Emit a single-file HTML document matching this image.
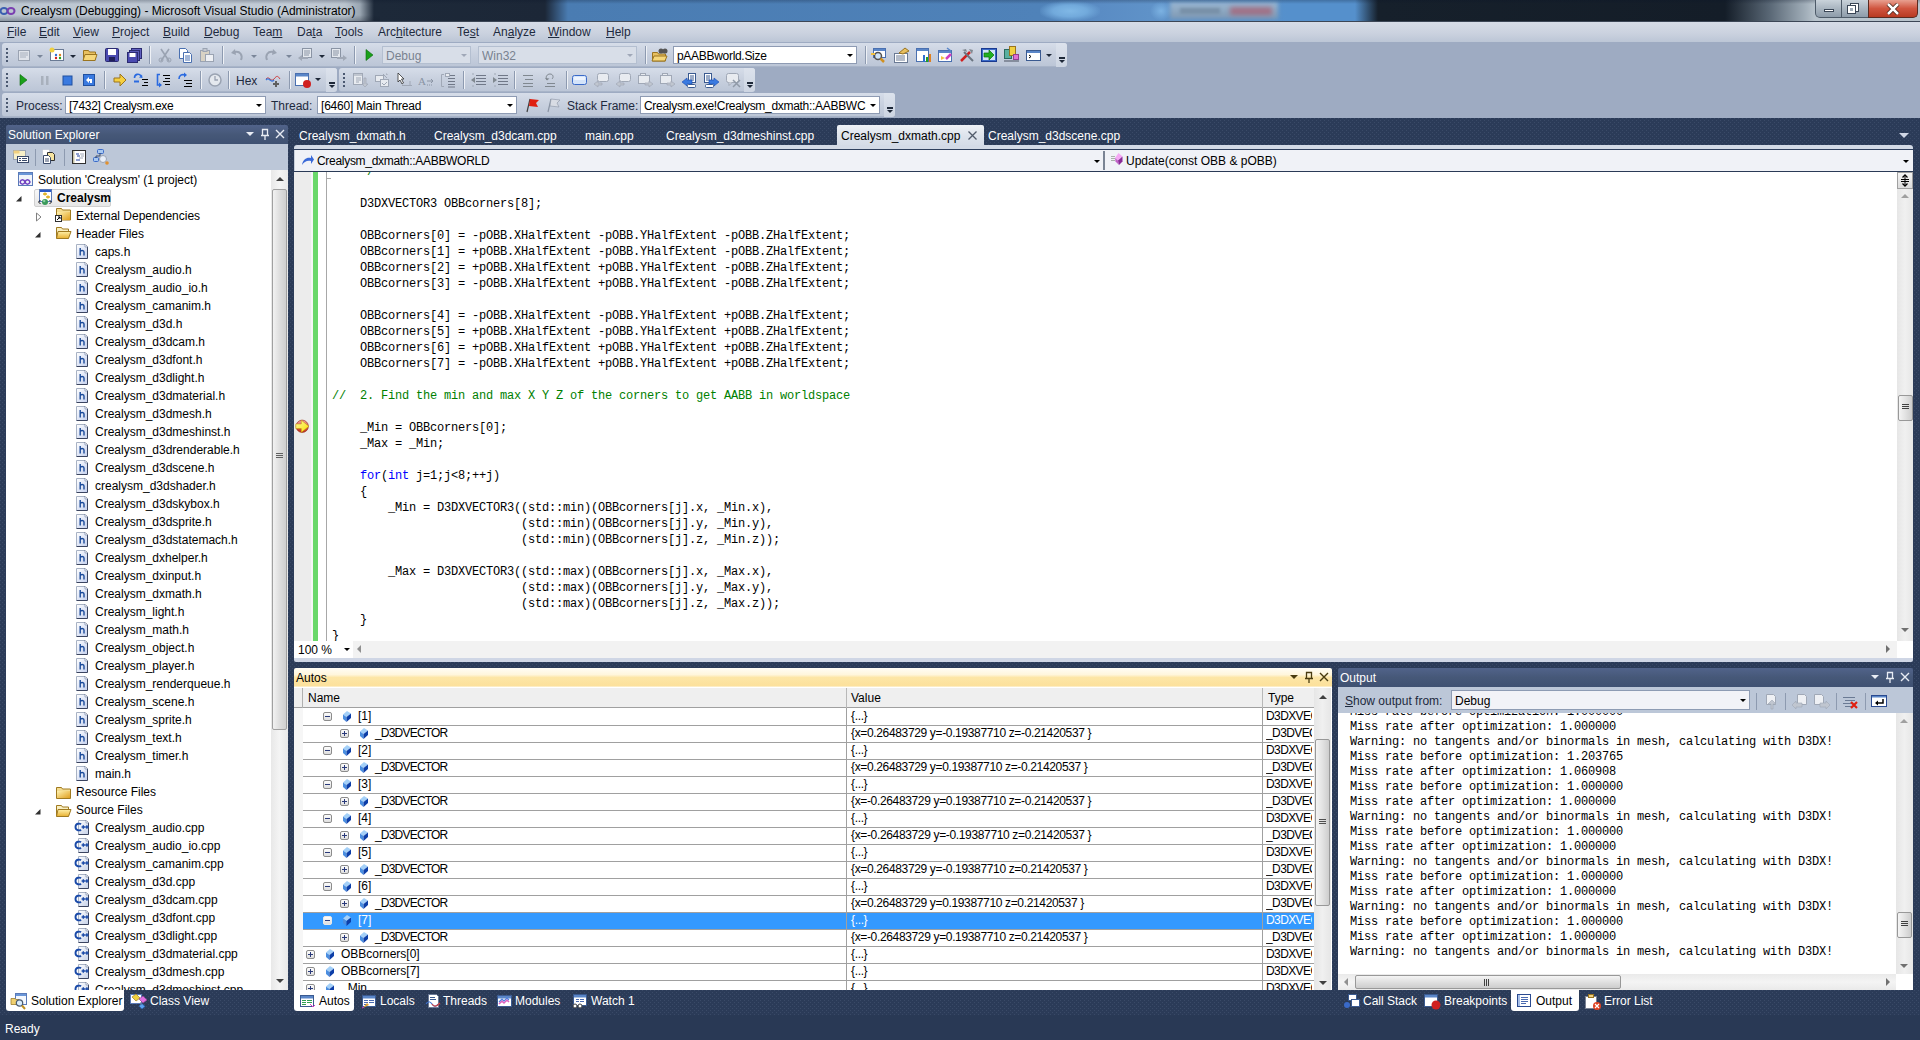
<!DOCTYPE html>
<html><head><meta charset="utf-8">
<style>
*{box-sizing:border-box}
html,body{margin:0;padding:0}
body{width:1920px;height:1040px;overflow:hidden;position:relative;background:conic-gradient(at 1px 1px,#0000 75%,#3a4a67 0) 0 0/4px 4px,conic-gradient(at 1px 1px,#0000 75%,#3a4a67 0) 2px 2px/4px 4px,#2b3b58;font-family:"Liberation Sans",sans-serif;font-size:12px;color:#000}
.a{position:absolute}
.t{position:absolute;white-space:pre;line-height:14px}
.c{position:absolute;white-space:pre;line-height:16px;font-family:"Liberation Mono",monospace;font-size:12px;letter-spacing:-0.2px}
.o{position:absolute;white-space:pre;line-height:15px;font-family:"Liberation Mono",monospace;font-size:12px;letter-spacing:-0.2px}
.kw{color:#0000ff}.cm{color:#008000}
.ic{position:absolute;width:16px;height:16px}
</style></head><body>
<div class="a" style="left:0px;top:0px;width:1920px;height:21px;background:linear-gradient(90deg,#bcc6d1 0,#c2cbd5 300px,#bac4ce 345px,#9aa6b2 360px,#1d2939 374px,#1c2737 545px,#4a7cb2 568px,#4f82b9 1040px,#5a8cc4 1100px,#5f92c8 1150px,#5590cc 1290px,#5590cc 1355px,#16202b 1378px,#141d28 1725px,#5a6876 1770px,#a0adb8 1805px,#b8c3cc 1815px)"></div>
<div class="a" style="left:1040px;top:1px;width:60px;height:20px;background:radial-gradient(ellipse at center,#80b8e6 0,#72aadc 40%,rgba(90,140,196,0) 75%)"></div>
<div class="a" style="left:1150px;top:1px;width:22px;height:20px;background:radial-gradient(ellipse at center,#7cb2e2 0,rgba(90,140,196,0) 70%)"></div>
<div class="a" style="left:1170px;top:2px;width:108px;height:17px;background:linear-gradient(#9cb8d2,#7e98b2);filter:blur(2px)"></div>
<div class="a" style="left:1180px;top:8px;width:40px;height:6px;background:#7890a8;filter:blur(1.5px)"></div>
<div class="a" style="left:1230px;top:7px;width:42px;height:8px;background:#b04a5c;opacity:0.6;filter:blur(2.5px)"></div>
<div class="a" style="left:0;top:0;width:1920px;height:4px;background:linear-gradient(rgba(10,20,40,0.25),rgba(10,20,40,0))"></div>
<div class="a" style="left:0;top:15px;width:380px;height:6px;background:linear-gradient(rgba(20,30,45,0),rgba(20,30,45,0.3))"></div>
<svg class="a" style="left:0;top:5px" width="16" height="12"><ellipse cx="4" cy="6" rx="3.5" ry="3" fill="none" stroke="#3b5fb0" stroke-width="2"/><ellipse cx="11" cy="6" rx="3.5" ry="3" fill="none" stroke="#7a3fb0" stroke-width="2"/></svg>
<div class="t" style="left:21px;top:4px;color:#000">Crealysm (Debugging) - Microsoft Visual Studio (Administrator)</div>
<div class="a" style="left:0px;top:21px;width:1920px;height:1px;background:#3c4656"></div>
<div class="a" style="left:1815px;top:0px;width:27px;height:18px;background:linear-gradient(#c9d2da,#a9b5c0 50%,#8e9caa);border:1px solid #4d5a68;border-top:none;border-radius:0 0 0 5px"></div>
<div class="a" style="left:1824px;top:9px;width:10px;height:3px;background:#fff;border:1px solid #3a4656"></div>
<div class="a" style="left:1841px;top:0px;width:28px;height:18px;background:linear-gradient(#c9d2da,#a9b5c0 50%,#8e9caa);border:1px solid #4d5a68;border-top:none"></div>
<div class="a" style="left:1851px;top:4px;width:7px;height:7px;border:2px solid #fff;outline:1px solid #3a4656"></div>
<div class="a" style="left:1848px;top:6px;width:7px;height:7px;border:2px solid #fff;background:#a0acb8;outline:1px solid #3a4656"></div>
<div class="a" style="left:1868px;top:0px;width:50px;height:18px;background:linear-gradient(#e8a090,#d0553f 50%,#b83a22);border:1px solid #5a2a20;border-top:none;border-radius:0 0 5px 0"></div>
<svg class="a" style="left:1886px;top:3px" width="14" height="12"><path d="M2 1 L12 11 M12 1 L2 11" stroke="#3a1a10" stroke-width="4"/><path d="M2 1 L12 11 M12 1 L2 11" stroke="#fff" stroke-width="2.5"/></svg>
<div class="a" style="left:0px;top:22px;width:1920px;height:20px;background:linear-gradient(#d6dce7,#cbd2df 55%,#bcc6d6)"></div>
<div class="t" style="left:7px;top:25px;color:#1e2a3e"><u>F</u>ile</div>
<div class="t" style="left:39px;top:25px;color:#1e2a3e"><u>E</u>dit</div>
<div class="t" style="left:73px;top:25px;color:#1e2a3e"><u>V</u>iew</div>
<div class="t" style="left:112px;top:25px;color:#1e2a3e"><u>P</u>roject</div>
<div class="t" style="left:163px;top:25px;color:#1e2a3e"><u>B</u>uild</div>
<div class="t" style="left:204px;top:25px;color:#1e2a3e"><u>D</u>ebug</div>
<div class="t" style="left:253px;top:25px;color:#1e2a3e">Tea<u>m</u></div>
<div class="t" style="left:297px;top:25px;color:#1e2a3e">Da<u>t</u>a</div>
<div class="t" style="left:335px;top:25px;color:#1e2a3e"><u>T</u>ools</div>
<div class="t" style="left:378px;top:25px;color:#1e2a3e">Arc<u>h</u>itecture</div>
<div class="t" style="left:457px;top:25px;color:#1e2a3e">Te<u>s</u>t</div>
<div class="t" style="left:493px;top:25px;color:#1e2a3e">An<u>a</u>lyze</div>
<div class="t" style="left:548px;top:25px;color:#1e2a3e"><u>W</u>indow</div>
<div class="t" style="left:606px;top:25px;color:#1e2a3e"><u>H</u>elp</div>
<div class="a" style="left:0px;top:42px;width:1920px;height:76px;background:#9eabc2"></div>
<div class="a" style="left:2px;top:43px;width:1065px;height:24px;background:linear-gradient(#d6dde9,#c9d1df 45%,#bcc6d7);border-radius:3px;border-bottom:1px solid #a8b4c8"></div>
<div class="a" style="left:6px;top:48px;width:2px;height:2px;background:#4a5870"></div>
<div class="a" style="left:6px;top:52px;width:2px;height:2px;background:#4a5870"></div>
<div class="a" style="left:6px;top:56px;width:2px;height:2px;background:#4a5870"></div>
<div class="a" style="left:6px;top:60px;width:2px;height:2px;background:#4a5870"></div>
<div class="a" style="left:1056px;top:43px;width:11px;height:24px;background:linear-gradient(#dce2ec,#cdd5e2);border-radius:0 3px 3px 0"></div>
<div class="a" style="left:1059px;top:57px;width:6px;height:2px;background:#1e2838"></div>
<div class="a" style="left:1059px;top:60px;width:0;height:0;border-left:3px solid transparent;border-right:3px solid transparent;border-top:3px solid #1e2838"></div>
<svg class="a" style="left:16px;top:47px" width="16" height="16" viewBox="0 0 16 16"><rect x="2.5" y="3.5" width="11" height="10" fill="#dfe3ea" stroke="#9aa3b2"/><path d="M4 6h8M4 8h8M4 10h6" stroke="#a8b0bd"/></svg>
<div class="a" style="left:37px;top:55px;width:0;height:0;border-left:3px solid transparent;border-right:3px solid transparent;border-top:3px solid #7a8699"></div>
<svg class="a" style="left:49px;top:47px" width="16" height="16" viewBox="0 0 16 16"><rect x="1.5" y="2.5" width="13" height="11" fill="#fff" stroke="#6a7a94"/><rect x="2" y="3" width="12" height="2" fill="#fff"/></svg>
<svg class="a" style="left:49px;top:47px" width="16" height="16" viewBox="0 0 16 16"><circle cx="3" cy="3" r="2.5" fill="#f0d040"/><circle cx="7" cy="8" r="1.2" fill="#3070d0"/><circle cx="11" cy="8" r="1.2" fill="#e08020"/><circle cx="7" cy="11" r="1.2" fill="#d02020"/><circle cx="11" cy="11" r="1.2" fill="#20a020"/></svg>
<div class="a" style="left:70px;top:55px;width:0;height:0;border-left:3px solid transparent;border-right:3px solid transparent;border-top:3px solid #1e2838"></div>
<svg class="a" style="left:82px;top:47px" width="16" height="16" viewBox="0 0 16 16"><path d="M1.5 3.5h5l1 1.5h6v8h-12z" fill="#e8c060" stroke="#9a7420"/><path d="M3 7.5h12l-2 6h-12z" fill="#f6d77a" stroke="#9a7420"/></svg>
<svg class="a" style="left:104px;top:47px" width="16" height="16" viewBox="0 0 16 16"><rect x="1.5" y="1.5" width="13" height="13" rx="1" fill="#4a4ab0" stroke="#2a2a70"/><rect x="4" y="2" width="8" height="6" fill="#fff"/><rect x="5" y="10" width="6" height="4" fill="#20205a"/></svg>
<svg class="a" style="left:126px;top:47px" width="16" height="16" viewBox="0 0 16 16"><rect x="5.5" y="1.5" width="10" height="10" fill="#6060c0" stroke="#2a2a70"/><rect x="3.5" y="3.5" width="10" height="10" fill="#5858b8" stroke="#2a2a70"/><rect x="1.5" y="5.5" width="10" height="10" fill="#4a4ab0" stroke="#2a2a70"/><rect x="3.5" y="6" width="6" height="4" fill="#fff"/></svg>
<div class="a" style="left:149px;top:46px;width:1px;height:18px;background:#8d9ab0;box-shadow:1px 0 0 #eef1f6"></div>
<svg class="a" style="left:157px;top:47px" width="16" height="16" viewBox="0 0 16 16"><path d="M4 2 L12 14 M12 2 L4 14" stroke="#9aa3b2" stroke-width="1.6"/><circle cx="4" cy="13" r="2" fill="none" stroke="#9aa3b2"/><circle cx="12" cy="13" r="2" fill="none" stroke="#9aa3b2"/></svg>
<svg class="a" style="left:177px;top:47px" width="16" height="16" viewBox="0 0 16 16"><path d="M2.5 1.5h6l2 2v8h-8z" fill="#fff" stroke="#4a70b0"/><path d="M6.5 5.5h6l2 2v8h-8z" fill="#fff" stroke="#4a70b0"/><path d="M8 9h5M8 11h5M8 13h5" stroke="#4a70b0"/></svg>
<svg class="a" style="left:199px;top:47px" width="16" height="16" viewBox="0 0 16 16"><rect x="1.5" y="3.5" width="9" height="11" fill="#d8d2c4" stroke="#9aa3b2"/><rect x="4" y="1.5" width="4" height="3" fill="#c4c8d0" stroke="#9aa3b2"/><rect x="6.5" y="7.5" width="8" height="7" fill="#eef0f4" stroke="#9aa3b2"/></svg>
<div class="a" style="left:222px;top:46px;width:1px;height:18px;background:#8d9ab0;box-shadow:1px 0 0 #eef1f6"></div>
<svg class="a" style="left:229px;top:47px" width="16" height="16" viewBox="0 0 16 16"><path d="M12 13 C14 8 11 4 6 5 L4 5.5" fill="none" stroke="#9aa3b2" stroke-width="2"/><path d="M2 6 L6 2 L7 8z" fill="#9aa3b2"/></svg>
<div class="a" style="left:251px;top:55px;width:0;height:0;border-left:3px solid transparent;border-right:3px solid transparent;border-top:3px solid #7a8699"></div>
<svg class="a" style="left:263px;top:47px" width="16" height="16" viewBox="0 0 16 16"><path d="M4 13 C2 8 5 4 10 5 L12 5.5" fill="none" stroke="#9aa3b2" stroke-width="2"/><path d="M14 6 L10 2 L9 8z" fill="#9aa3b2"/></svg>
<div class="a" style="left:286px;top:55px;width:0;height:0;border-left:3px solid transparent;border-right:3px solid transparent;border-top:3px solid #7a8699"></div>
<svg class="a" style="left:297px;top:47px" width="16" height="16" viewBox="0 0 16 16"><rect x="5.5" y="1.5" width="9" height="9" fill="#e4e8ee" stroke="#8a94a4"/><path d="M7 4h6M7 6h6M7 8h5" stroke="#8a94a4"/><path d="M1 11 l4 -3 v2 h6 v2 h-6 v2z" fill="#a0a8b6"/></svg>
<div class="a" style="left:319px;top:55px;width:0;height:0;border-left:3px solid transparent;border-right:3px solid transparent;border-top:3px solid #1e2838"></div>
<svg class="a" style="left:330px;top:47px" width="18" height="16" viewBox="0 0 18 16"><rect x="1.5" y="1.5" width="9" height="9" fill="#e4e8ee" stroke="#8a94a4"/><path d="M3 4h6M3 6h6M3 8h5" stroke="#8a94a4"/><path d="M17 11 l-4 -3 v2 h-6 v2 h6 v2z" fill="#a0a8b6"/></svg>
<div class="a" style="left:354px;top:46px;width:1px;height:18px;background:#8d9ab0;box-shadow:1px 0 0 #eef1f6"></div>
<svg class="a" style="left:361px;top:47px" width="16" height="16" viewBox="0 0 16 16"><path d="M5 2.5 L12 8 L5 13.5z" fill="#1aa01a" stroke="#0a6a0a" stroke-width="0.6"/></svg>
<div class="a" style="left:382px;top:46px;width:89px;height:18px;background:#d8dee8;border:1px solid #b4bfd0"></div>
<div class="t" style="left:386px;top:49px;width:72px;overflow:hidden;color:#788290;letter-spacing:0px">Debug</div>
<div class="a" style="left:461px;top:54px;width:0;height:0;border-left:3px solid transparent;border-right:3px solid transparent;border-top:3px solid #a0a8b8"></div>
<div class="a" style="left:478px;top:46px;width:159px;height:18px;background:#d8dee8;border:1px solid #b4bfd0"></div>
<div class="t" style="left:482px;top:49px;width:142px;overflow:hidden;color:#788290;letter-spacing:0px">Win32</div>
<div class="a" style="left:627px;top:54px;width:0;height:0;border-left:3px solid transparent;border-right:3px solid transparent;border-top:3px solid #a0a8b8"></div>
<div class="a" style="left:645px;top:46px;width:1px;height:18px;background:#8d9ab0;box-shadow:1px 0 0 #eef1f6"></div>
<svg class="a" style="left:651px;top:47px" width="17" height="16" viewBox="0 0 17 16"><path d="M1.5 5.5h5l1 1.5h7v7h-13z" fill="#e8c060" stroke="#9a7420"/><path d="M3 9h13l-2 5h-13z" fill="#f6d77a" stroke="#9a7420"/><circle cx="10" cy="4" r="2.5" fill="#555" /><circle cx="14" cy="4" r="2.5" fill="#555"/></svg>
<div class="a" style="left:673px;top:46px;width:184px;height:18px;background:#fff;border:1px solid #8e9bb3"></div>
<div class="t" style="left:677px;top:49px;width:167px;overflow:hidden;color:#000;letter-spacing:-0.3px">pAABBworld.Size</div>
<div class="a" style="left:847px;top:54px;width:0;height:0;border-left:3px solid transparent;border-right:3px solid transparent;border-top:3px solid #000"></div>
<div class="a" style="left:865px;top:46px;width:1px;height:18px;background:#8d9ab0;box-shadow:1px 0 0 #eef1f6"></div>
<svg class="a" style="left:870px;top:47px" width="17" height="16" viewBox="0 0 17 16"><rect x="3.5" y="1.5" width="12" height="9" fill="#fff" stroke="#4a70b0"/><rect x="4" y="2" width="11" height="2" fill="#5a86c8"/><circle cx="8" cy="9" r="3.5" fill="#cfe4f8" stroke="#505050" stroke-width="1.5"/><path d="M10.5 11.5 L14 15" stroke="#d09020" stroke-width="2.5"/><path d="M1 7h4" stroke="#f0c040" stroke-width="2"/></svg>
<svg class="a" style="left:893px;top:47px" width="17" height="16" viewBox="0 0 17 16"><rect x="1.5" y="6.5" width="13" height="9" fill="#fff" stroke="#6a7a94"/><path d="M3 9h9M3 11h9M3 13h9" stroke="#6a7a94"/><path d="M6 6 l6 -5 l4 3 l-6 3z" fill="#e8c060" stroke="#9a7420"/></svg>
<svg class="a" style="left:915px;top:47px" width="17" height="16" viewBox="0 0 17 16"><rect x="1.5" y="1.5" width="12" height="13" fill="#fff" stroke="#4a70b0"/><rect x="2" y="2" width="11" height="2" fill="#5a86c8"/><rect x="8" y="8" width="2" height="7" fill="#3070d0"/><rect x="11" y="10" width="2" height="5" fill="#20a020"/><rect x="14" y="7" width="2" height="8" fill="#e08020"/></svg>
<svg class="a" style="left:937px;top:47px" width="17" height="16" viewBox="0 0 17 16"><rect x="1.5" y="3.5" width="13" height="11" fill="#fff" stroke="#4a70b0"/><rect x="2" y="4" width="12" height="2" fill="#5a86c8"/><path d="M4 9 l4 2 l-4 2z" fill="#f0c040"/><path d="M9 12 l5 -5" stroke="#d040c0" stroke-width="2.5"/><path d="M10 1 l4 3" stroke="#5a86c8" stroke-width="1.5"/></svg>
<svg class="a" style="left:959px;top:47px" width="17" height="16" viewBox="0 0 17 16"><path d="M2 14 L11 5" stroke="#d02020" stroke-width="2.5"/><path d="M14 14 L5 5" stroke="#6a7480" stroke-width="2"/><path d="M3 3 l4 -1 l1 3z" fill="#808890"/><path d="M10 2 l4 1 l-1 4z" fill="#808890"/></svg>
<svg class="a" style="left:981px;top:47px" width="17" height="16" viewBox="0 0 17 16"><rect x="0.5" y="1.5" width="15" height="13" fill="#3a6ac8" stroke="#1a3a90"/><rect x="2" y="3" width="12" height="10" fill="#cfe4f8"/><path d="M3 6h5v-3l5 5l-5 5v-3h-5z" fill="#20b020" stroke="#0a700a" stroke-width="0.7"/></svg>
<svg class="a" style="left:1003px;top:45px" width="17" height="18" viewBox="0 0 17 18"><rect x="1.5" y="4.5" width="7" height="9" fill="#5ab0a0" stroke="#2a6a60"/><rect x="6.5" y="1.5" width="6" height="9" fill="#f0d040" stroke="#9a7420"/><rect x="10.5" y="9.5" width="5" height="5" fill="#e070d0" stroke="#904090"/><path d="M1 16h15" stroke="#707888" stroke-width="1.5"/></svg>
<svg class="a" style="left:1025px;top:47px" width="17" height="16" viewBox="0 0 17 16"><rect x="1.5" y="3.5" width="14" height="10" fill="#fff" stroke="#3a5a90"/><rect x="2" y="4" width="13" height="2" fill="#5a86c8"/><path d="M4 8 l2 1.5 l-2 1.5" fill="none" stroke="#000"/></svg>
<div class="a" style="left:1046px;top:54px;width:0;height:0;border-left:3px solid transparent;border-right:3px solid transparent;border-top:3px solid #1e2838"></div>
<div class="a" style="left:2px;top:68px;width:335px;height:24px;background:linear-gradient(#d6dde9,#c9d1df 45%,#bcc6d7);border-radius:3px;border-bottom:1px solid #a8b4c8"></div>
<div class="a" style="left:6px;top:73px;width:2px;height:2px;background:#4a5870"></div>
<div class="a" style="left:6px;top:77px;width:2px;height:2px;background:#4a5870"></div>
<div class="a" style="left:6px;top:81px;width:2px;height:2px;background:#4a5870"></div>
<div class="a" style="left:6px;top:85px;width:2px;height:2px;background:#4a5870"></div>
<div class="a" style="left:326px;top:68px;width:11px;height:24px;background:linear-gradient(#dce2ec,#cdd5e2);border-radius:0 3px 3px 0"></div>
<div class="a" style="left:329px;top:82px;width:6px;height:2px;background:#1e2838"></div>
<div class="a" style="left:329px;top:85px;width:0;height:0;border-left:3px solid transparent;border-right:3px solid transparent;border-top:3px solid #1e2838"></div>
<svg class="a" style="left:15px;top:72px" width="16" height="16" viewBox="0 0 16 16"><path d="M5 2.5 L12 8 L5 13.5z" fill="#1aa01a" stroke="#0a6a0a" stroke-width="0.6"/></svg>
<svg class="a" style="left:37px;top:72px" width="16" height="16" viewBox="0 0 16 16"><rect x="4" y="4" width="2.5" height="9" fill="#a8b0bc"/><rect x="9" y="4" width="2.5" height="9" fill="#a8b0bc"/></svg>
<svg class="a" style="left:59px;top:72px" width="16" height="16" viewBox="0 0 16 16"><rect x="4" y="4" width="9" height="9" fill="#3a7ae0" stroke="#2050a0"/></svg>
<svg class="a" style="left:81px;top:72px" width="16" height="16" viewBox="0 0 16 16"><rect x="2.5" y="2.5" width="11" height="11" fill="#3a7ae0" stroke="#2050a0"/><path d="M5 8 l3 -3 v2 h3 v4 h-2 v-2 h-1 v2z" fill="#fff"/></svg>
<div class="a" style="left:104px;top:71px;width:1px;height:18px;background:#8d9ab0;box-shadow:1px 0 0 #eef1f6"></div>
<svg class="a" style="left:112px;top:72px" width="16" height="16" viewBox="0 0 16 16"><path d="M2 6h6v-4l6 6l-6 6v-4h-6z" fill="#f6d040" stroke="#9a7420"/></svg>
<svg class="a" style="left:133px;top:72px" width="16" height="16" viewBox="0 0 16 16"><path d="M1.5 6 C1.5 2 6 1 8 4" fill="none" stroke="#2a6ae0" stroke-width="1.6"/><path d="M6 5.5 L9.5 6 L9 2.5z" fill="#2a6ae0"/><path d="M9 7.5h6M11 10.5h4M9 13.5h6" stroke="#000" stroke-width="1"/><path d="M1 8.5h5v2h-5z" fill="#2a6ae0"/></svg>
<svg class="a" style="left:155px;top:72px" width="16" height="16" viewBox="0 0 16 16"><path d="M5 2.5 H2.5 V13 H5" fill="none" stroke="#2a6ae0" stroke-width="1.6"/><path d="M4 15.5 L7 13 L4 10.5z" fill="#2a6ae0"/><path d="M8 3.5h7M10 6.5h5M8 9.5h7M10 12.5h5" stroke="#000" stroke-width="1"/></svg>
<svg class="a" style="left:177px;top:72px" width="16" height="16" viewBox="0 0 16 16"><path d="M2 7 C2 3 5 2 8 3" fill="none" stroke="#2a6ae0" stroke-width="1.6"/><path d="M7 0.5 L10 3 L7 5.5z" fill="#2a6ae0"/><path d="M7 8.5h8M9 11.5h6M7 14.5h8" stroke="#000" stroke-width="1"/></svg>
<div class="a" style="left:200px;top:71px;width:1px;height:18px;background:#8d9ab0;box-shadow:1px 0 0 #eef1f6"></div>
<svg class="a" style="left:207px;top:72px" width="16" height="16" viewBox="0 0 16 16"><circle cx="8" cy="8" r="6" fill="#e4e8ee" stroke="#9aa3b2" stroke-width="1.5"/><path d="M8 4v4h3" stroke="#9aa3b2" stroke-width="1.3" fill="none"/></svg>
<div class="a" style="left:228px;top:71px;width:1px;height:18px;background:#8d9ab0;box-shadow:1px 0 0 #eef1f6"></div>
<div class="t" style="left:236px;top:74px;color:#1e2a3e">Hex</div>
<svg class="a" style="left:265px;top:72px" width="16" height="16" viewBox="0 0 16 16"><path d="M1 7 c3 -4 5 4 8 0 s4 -3 6 0" fill="none" stroke="#d04040" stroke-width="1"/><path d="M1 8 c3 -4 5 4 8 0" fill="none" stroke="#3a7ae0" stroke-width="1.3"/><path d="M11 9v6M8 12h6" stroke="#606060" stroke-width="2"/></svg>
<div class="a" style="left:289px;top:71px;width:1px;height:18px;background:#8d9ab0;box-shadow:1px 0 0 #eef1f6"></div>
<svg class="a" style="left:295px;top:72px" width="18" height="17" viewBox="0 0 18 17"><rect x="0.5" y="1.5" width="13" height="12" fill="#fff" stroke="#4a70b0"/><rect x="1" y="2" width="12" height="2.5" fill="#5a86c8"/><circle cx="12" cy="12" r="4" fill="#d02020"/></svg>
<div class="a" style="left:315px;top:78px;width:0;height:0;border-left:3px solid transparent;border-right:3px solid transparent;border-top:3px solid #1e2838"></div>
<div class="a" style="left:339px;top:68px;width:416px;height:24px;background:linear-gradient(#d6dde9,#c9d1df 45%,#bcc6d7);border-radius:3px;border-bottom:1px solid #a8b4c8"></div>
<div class="a" style="left:343px;top:73px;width:2px;height:2px;background:#4a5870"></div>
<div class="a" style="left:343px;top:77px;width:2px;height:2px;background:#4a5870"></div>
<div class="a" style="left:343px;top:81px;width:2px;height:2px;background:#4a5870"></div>
<div class="a" style="left:343px;top:85px;width:2px;height:2px;background:#4a5870"></div>
<div class="a" style="left:744px;top:68px;width:11px;height:24px;background:linear-gradient(#dce2ec,#cdd5e2);border-radius:0 3px 3px 0"></div>
<div class="a" style="left:747px;top:82px;width:6px;height:2px;background:#1e2838"></div>
<div class="a" style="left:747px;top:85px;width:0;height:0;border-left:3px solid transparent;border-right:3px solid transparent;border-top:3px solid #1e2838"></div>
<svg class="a" style="left:352px;top:72px" width="17" height="16" viewBox="0 0 17 16"><rect x="1.5" y="1.5" width="9" height="11" fill="#e8ebf0" stroke="#a0a8b6"/><rect x="2" y="2" width="8" height="2" fill="#c0c6d0"/><path d="M4 6h5M4 8h5M4 10h3" stroke="#a0a8b6"/><path d="M12 6v6h-2l3 3l3-3h-2v-6z" fill="#c0c6d0" stroke="#a0a8b6" stroke-width="0.7"/></svg>
<svg class="a" style="left:374px;top:72px" width="17" height="16" viewBox="0 0 17 16"><rect x="1.5" y="3.5" width="8" height="6" fill="#e8ebf0" stroke="#a0a8b6"/><rect x="6.5" y="7.5" width="8" height="7" fill="#e8ebf0" stroke="#a0a8b6"/><path d="M9 2 l4 4 M12 2h1v1" stroke="#a0a8b6" fill="none"/><path d="M8 11 l2 2 l3 -3" stroke="#a0a8b6" fill="none"/></svg>
<svg class="a" style="left:396px;top:72px" width="17" height="16" viewBox="0 0 17 16"><path d="M2 1 L2 10 L4 8 L6 12 L7.5 11 L5.5 7 L8 7z" fill="#fff" stroke="#303030" stroke-width="0.8"/><path d="M6 13.5h10M14 9v4.5" stroke="#a0a8b6"/></svg>
<svg class="a" style="left:418px;top:72px" width="17" height="16" viewBox="0 0 17 16"><text x="0" y="13" font-family="Liberation Serif" font-size="11" fill="#8a94a4">A</text><path d="M9 9h6M13 7l2 2l-2 2" stroke="#8a94a4" fill="none"/><path d="M9 13h1M11 13h1M13 13h1" stroke="#8a94a4"/></svg>
<svg class="a" style="left:440px;top:72px" width="17" height="16" viewBox="0 0 17 16"><path d="M4 2.5H1.5v12H4" fill="none" stroke="#a0a8b6"/><path d="M6 3.5h9M8 6.5h7M8 9.5h7M8 12.5h7M8 15h7" stroke="#707888"/><rect x="5.5" y="1.5" width="4" height="3" fill="#e8ebf0" stroke="#a0a8b6"/></svg>
<div class="a" style="left:463px;top:71px;width:1px;height:18px;background:#8d9ab0;box-shadow:1px 0 0 #eef1f6"></div>
<svg class="a" style="left:470px;top:72px" width="17" height="16" viewBox="0 0 17 16"><path d="M6 3.5h10M6 6.5h10M6 9.5h10M6 12.5h10" stroke="#707888"/><path d="M1 8 l4-3v6z" fill="#808890"/><path d="M3 1v2M3 13v2" stroke="#a0a8b6"/></svg>
<svg class="a" style="left:492px;top:72px" width="17" height="16" viewBox="0 0 17 16"><path d="M6 3.5h10M6 6.5h10M6 9.5h10M6 12.5h10" stroke="#707888"/><path d="M5 8 l-4-3v6z" fill="#808890"/><path d="M3 1v2M3 13v2" stroke="#a0a8b6"/></svg>
<div class="a" style="left:514px;top:71px;width:1px;height:18px;background:#8d9ab0;box-shadow:1px 0 0 #eef1f6"></div>
<svg class="a" style="left:520px;top:72px" width="17" height="16" viewBox="0 0 17 16"><path d="M3 3.5h10M5 7.5h8M3 11.5h10M3 14.5h10" stroke="#808890"/></svg>
<svg class="a" style="left:542px;top:72px" width="17" height="16" viewBox="0 0 17 16"><path d="M3 14.5h10M5 11.5h8" stroke="#808890"/><path d="M5 8 C3 5 5 2 8 2 C11 2 12 5 10 7" fill="none" stroke="#808890"/><path d="M3 6l2 2.5l2.5-2z" fill="#808890"/></svg>
<div class="a" style="left:566px;top:71px;width:1px;height:18px;background:#8d9ab0;box-shadow:1px 0 0 #eef1f6"></div>
<svg class="a" style="left:571px;top:72px" width="17" height="16" viewBox="0 0 17 16"><rect x="1.5" y="3.5" width="14" height="9" rx="2" fill="#d4e4fa" stroke="#3a6ac8"/><rect x="3" y="5" width="11" height="3" rx="1" fill="#eef4fe"/></svg>
<svg class="a" style="left:593px;top:72px" width="17" height="16" viewBox="0 0 17 16"><rect x="4.5" y="1.5" width="11" height="8" rx="2" fill="#e8ebf0" stroke="#a0a8b6"/><path d="M1 12l4-3v2h4v2h-4v2z" fill="#c0c6d0" stroke="#a0a8b6" stroke-width="0.7"/></svg>
<svg class="a" style="left:615px;top:72px" width="17" height="16" viewBox="0 0 17 16"><rect x="4.5" y="1.5" width="11" height="8" rx="2" fill="#e8ebf0" stroke="#a0a8b6"/><path d="M1 12l4-3v2h4v2h-4v2z" fill="#c0c6d0" stroke="#a0a8b6" stroke-width="0.7"/></svg>
<svg class="a" style="left:637px;top:72px" width="17" height="16" viewBox="0 0 17 16"><rect x="1.5" y="3.5" width="11" height="8" fill="#e8ebf0" stroke="#a0a8b6"/><rect x="3.5" y="1.5" width="5" height="2" fill="#e8ebf0" stroke="#a0a8b6"/><path d="M16 12l-4-3v2h-4v2h4v2z" fill="#c0c6d0" stroke="#a0a8b6" stroke-width="0.7"/></svg>
<svg class="a" style="left:659px;top:72px" width="17" height="16" viewBox="0 0 17 16"><rect x="1.5" y="3.5" width="11" height="8" fill="#e8ebf0" stroke="#a0a8b6"/><rect x="3.5" y="1.5" width="5" height="2" fill="#e8ebf0" stroke="#a0a8b6"/><path d="M16 12l-4-3v2h-4v2h4v2z" fill="#c0c6d0" stroke="#a0a8b6" stroke-width="0.7"/></svg>
<svg class="a" style="left:681px;top:72px" width="17" height="16" viewBox="0 0 17 16"><rect x="7.5" y="1.5" width="7" height="9" fill="#fff" stroke="#3a5a90"/><path d="M9 4h4M9 6h4M9 8h4" stroke="#3a5a90"/><path d="M1 10 l5-4 v2h5v4h-5v2z" fill="#3a7ae0" stroke="#1a4ab0" stroke-width="0.6"/><rect x="6.5" y="12.5" width="8" height="3" rx="1" fill="#fff" stroke="#3a5a90"/></svg>
<svg class="a" style="left:703px;top:72px" width="17" height="16" viewBox="0 0 17 16"><rect x="1.5" y="1.5" width="7" height="9" fill="#fff" stroke="#3a5a90"/><path d="M3 4h4M3 6h4M3 8h4" stroke="#3a5a90"/><path d="M16 10 l-5-4 v2h-5v4h5v2z" fill="#3a7ae0" stroke="#1a4ab0" stroke-width="0.6"/><rect x="2.5" y="12.5" width="8" height="3" rx="1" fill="#fff" stroke="#3a5a90"/></svg>
<svg class="a" style="left:725px;top:72px" width="17" height="16" viewBox="0 0 17 16"><rect x="1.5" y="1.5" width="12" height="9" rx="2" fill="#e8ebf0" stroke="#a0a8b6"/><path d="M4 10.5v3l3-3" fill="#e8ebf0" stroke="#a0a8b6"/><path d="M8 8 l7 7 M15 8 l-7 7" stroke="#909aa8" stroke-width="1.5"/></svg>
<div class="a" style="left:2px;top:93px;width:893px;height:24px;background:linear-gradient(#d6dde9,#c9d1df 45%,#bcc6d7);border-radius:3px;border-bottom:1px solid #a8b4c8"></div>
<div class="a" style="left:6px;top:98px;width:2px;height:2px;background:#4a5870"></div>
<div class="a" style="left:6px;top:102px;width:2px;height:2px;background:#4a5870"></div>
<div class="a" style="left:6px;top:106px;width:2px;height:2px;background:#4a5870"></div>
<div class="a" style="left:6px;top:110px;width:2px;height:2px;background:#4a5870"></div>
<div class="a" style="left:884px;top:93px;width:11px;height:24px;background:linear-gradient(#dce2ec,#cdd5e2);border-radius:0 3px 3px 0"></div>
<div class="a" style="left:887px;top:107px;width:6px;height:2px;background:#1e2838"></div>
<div class="a" style="left:887px;top:110px;width:0;height:0;border-left:3px solid transparent;border-right:3px solid transparent;border-top:3px solid #1e2838"></div>
<div class="t" style="left:16px;top:99px;color:#1e2a3e">Process:</div>
<div class="a" style="left:65px;top:96px;width:201px;height:18px;background:#fff;border:1px solid #8e9bb3"></div>
<div class="t" style="left:69px;top:99px;width:184px;overflow:hidden;color:#000;letter-spacing:-0.3px">[7432] Crealysm.exe</div>
<div class="a" style="left:256px;top:104px;width:0;height:0;border-left:3px solid transparent;border-right:3px solid transparent;border-top:3px solid #000"></div>
<div class="t" style="left:271px;top:99px;color:#1e2a3e">Thread:</div>
<div class="a" style="left:317px;top:96px;width:200px;height:18px;background:#fff;border:1px solid #8e9bb3"></div>
<div class="t" style="left:321px;top:99px;width:183px;overflow:hidden;color:#000;letter-spacing:-0.2px">[6460] Main Thread</div>
<div class="a" style="left:507px;top:104px;width:0;height:0;border-left:3px solid transparent;border-right:3px solid transparent;border-top:3px solid #000"></div>
<svg class="a" style="left:524px;top:97px" width="17" height="16" viewBox="0 0 17 16"><path d="M3 15 L6 2" stroke="#404040" stroke-width="1.2"/><path d="M6 2 l9 1 l-3 3 l2 4 l-9 -1z" fill="#e02010"/></svg>
<svg class="a" style="left:545px;top:97px" width="17" height="16" viewBox="0 0 17 16"><path d="M3 15 L6 2" stroke="#8a94a4" stroke-width="1.2"/><path d="M6 2 l9 1 l-3 3 l2 4 l-9 -1z" fill="#d8dce4" stroke="#8a94a4" stroke-width="0.6"/></svg>
<div class="t" style="left:567px;top:99px;color:#1e2a3e">Stack Frame:</div>
<div class="a" style="left:640px;top:96px;width:240px;height:18px;background:#fff;border:1px solid #8e9bb3"></div>
<div class="t" style="left:644px;top:99px;width:223px;overflow:hidden;color:#000;letter-spacing:-0.3px">Crealysm.exe!Crealysm_dxmath::AABBWC</div>
<div class="a" style="left:870px;top:104px;width:0;height:0;border-left:3px solid transparent;border-right:3px solid transparent;border-top:3px solid #000"></div>
<div class="a" style="left:6px;top:125px;width:282px;height:19px;background:linear-gradient(#51638a,#465878 50%,#3f5172);border-radius:2px 2px 0 0"></div>
<div class="t" style="left:8px;top:128px;color:#fff">Solution Explorer</div>
<div class="a" style="left:246px;top:132px;width:0;height:0;border-left:4px solid transparent;border-right:4px solid transparent;border-top:4px solid #e8ecf4"></div>
<svg class="a" style="left:260px;top:128px" width="10" height="13" viewBox="0 0 10 13"><path d="M2.5 1.5h5v6h-5z M1 7.5h8 M5 8v4" fill="none" stroke="#e8ecf4" stroke-width="1.3"/></svg>
<svg class="a" style="left:275px;top:129px" width="10" height="10" viewBox="0 0 10 10"><path d="M1 1L9 9M9 1L1 9" stroke="#e8ecf4" stroke-width="1.4"/></svg>
<div class="a" style="left:6px;top:144px;width:282px;height:26px;background:#bcc7d8"></div>
<svg class="a" style="left:13px;top:149px" width="17" height="16" viewBox="0 0 17 16"><rect x="0.5" y="1.5" width="12" height="9" fill="#f8f0c8" stroke="#9aa3b2"/><rect x="0.5" y="1.5" width="6" height="3" fill="#f0d080"/><rect x="4.5" y="7.5" width="11" height="6" fill="#fff" stroke="#3a4a6a"/><path d="M6 9.5h2M9 9.5h5M6 11.5h2M9 11.5h5" stroke="#3a4a6a"/></svg>
<div class="a" style="left:35px;top:149px;width:1px;height:17px;background:#8d9ab0"></div>
<svg class="a" style="left:41px;top:149px" width="17" height="16" viewBox="0 0 17 16"><rect x="1.5" y="0.5" width="7" height="9" fill="#fff" stroke="#b0b8c8" stroke-dasharray="1 1"/><path d="M6.5 3.5h5l2 2v6h-7z" fill="#f6e4a0" stroke="#303030"/><path d="M2.5 6.5h5l2 2v6h-7z" fill="#fff" stroke="#3a4a6a"/><path d="M4 10h4M4 12h4" stroke="#3a4a6a"/></svg>
<div class="a" style="left:64px;top:149px;width:1px;height:17px;background:#8d9ab0"></div>
<svg class="a" style="left:71px;top:149px" width="17" height="16" viewBox="0 0 17 16"><rect x="1.5" y="1.5" width="13" height="13" fill="#fff" stroke="#303030"/><rect x="2" y="2" width="1.5" height="12" fill="#c8c4a8"/><path d="M5 5h3M6 7h3M5 11h4" stroke="#2040a0" stroke-width="1.2"/><path d="M9 5h4M10 7h3M8 9h4" stroke="#a0a8b6"/></svg>
<svg class="a" style="left:93px;top:148px" width="17" height="18" viewBox="0 0 17 18"><rect x="4.5" y="1.5" width="6" height="4" rx="1" fill="#a8c8f0" stroke="#3a6ac8"/><rect x="0.5" y="9.5" width="5" height="4" rx="1" fill="#a8c8f0" stroke="#3a6ac8"/><path d="M7 5v3h-4v2" fill="none" stroke="#3a4a6a"/><circle cx="10" cy="11" r="3.5" fill="#e8eef8" stroke="#9aa3b2"/><circle cx="14" cy="15" r="1.8" fill="#e09030"/></svg>
<div class="a" style="left:6px;top:170px;width:282px;height:820px;background:#fff"></div>
<div class="a" style="left:271px;top:170px;width:17px;height:820px;background:linear-gradient(90deg,#e8e8e8,#f4f4f4 50%,#e8e8e8)"></div>
<div class="a" style="left:276px;top:177px;width:0;height:0;border-left:4px solid transparent;border-right:4px solid transparent;border-bottom:4px solid #404040"></div>
<div class="a" style="left:272px;top:189px;width:15px;height:541px;background:linear-gradient(90deg,#f2f2f2,#e0e0e0 45%,#cfcfcf);border:1px solid #a0a0a0;border-radius:2px"></div>
<svg class="a" style="left:275px;top:452px" width="9" height="8" viewBox="0 0 9 8"><path d="M1 1.5h7M1 3.5h7M1 5.5h7" stroke="#606060"/></svg>
<div class="a" style="left:276px;top:979px;width:0;height:0;border-left:4px solid transparent;border-right:4px solid transparent;border-top:4px solid #404040"></div>
<div class="a" style="left:6px;top:170px;width:265px;height:820px;overflow:hidden">
<svg class="a" style="left:11px;top:1px" width="17" height="16" viewBox="0 0 17 16"><rect x="1.5" y="1.5" width="14" height="13" fill="#f0f4fa" stroke="#5a7ab8"/><rect x="2" y="2" width="13" height="2" fill="#6a96d8"/><path d="M3 11 c1 -3 4 -3 5 0 s4 3 5 0 c-1 -3 -4 -3 -5 0 s-4 3 -5 0" fill="none" stroke="#7040c0" stroke-width="1.5"/></svg>
<div class="t" style="left:32px;top:3px;">Solution &#x27;Crealysm&#x27; (1 project)</div>
<div class="a" style="left:28px;top:19px;width:77px;height:18px;background:linear-gradient(#f8f8f8,#e6e6e6);border:1px solid #d0d0d0;border-radius:2px"></div>
<svg class="a" style="left:9px;top:25px" width="8" height="8" viewBox="0 0 8 8"><path d="M6.5 1 L6.5 6.5 L1 6.5z" fill="#303030"/></svg>
<svg class="a" style="left:31px;top:19px" width="17" height="17" viewBox="0 0 17 17"><rect x="2.5" y="0.5" width="12" height="12" fill="#fff" stroke="#5a7ab8"/><rect x="3" y="1" width="11" height="2" fill="#2a5ac8"/><path d="M6 5h4M8 3.5v3M9 8h4M11 6.5v3" stroke="#e0b020" stroke-width="1.5"/><circle cx="8" cy="13" r="3" fill="#3a9a5a"/><circle cx="7.2" cy="12" r="1.2" fill="#8ad0a0"/><path d="M3.5 11l-2 2l2 2M12.5 11l2 2l-2 2" fill="none" stroke="#000" stroke-width="0.9"/></svg>
<div class="t" style="left:51px;top:21px;font-weight:bold">Crealysm</div>
<svg class="a" style="left:29px;top:42px" width="8" height="10" viewBox="0 0 8 10"><path d="M1.5 1 L6 5 L1.5 9z" fill="#fff" stroke="#808080"/></svg>
<svg class="a" style="left:49px;top:37px" width="17" height="15" viewBox="0 0 17 15"><defs><linearGradient id="fge" x1="0" y1="0" x2="1" y2="1"><stop offset="0" stop-color="#fff2b0"/><stop offset="1" stop-color="#e0a020"/></linearGradient></defs><path d="M1.5 1.5h5l1 1.5h8v10h-14z" fill="#f4dc90" stroke="#a07a20"/><path d="M2 5h13v8h-13z" fill="url(#fge)"/><rect x="0.5" y="8.5" width="6" height="6" fill="#fff" stroke="#303030"/><path d="M2 13 l3 -3 M3 10h2v2" stroke="#000" fill="none"/></svg>
<div class="t" style="left:70px;top:39px;">External Dependencies</div>
<svg class="a" style="left:28px;top:61px" width="8" height="8" viewBox="0 0 8 8"><path d="M6.5 1 L6.5 6.5 L1 6.5z" fill="#303030"/></svg>
<svg class="a" style="left:49px;top:56px" width="17" height="14" viewBox="0 0 17 14"><defs><linearGradient id="fgo" x1="0" y1="0" x2="0" y2="1"><stop offset="0" stop-color="#fff0a8"/><stop offset="1" stop-color="#e8b030"/></linearGradient></defs><path d="M1.5 1.5h5l1 1.5h6v9h-12z" fill="#f8eec0" stroke="#a07a20"/><path d="M3 5.5h13l-2.5 7h-12z" fill="url(#fgo)" stroke="#a07a20"/></svg>
<div class="t" style="left:70px;top:57px;">Header Files</div>
<svg class="a" style="left:69px;top:73px" width="14" height="17" viewBox="0 0 14 17"><defs><linearGradient id="hg" x1="0" y1="0" x2="1" y2="1"><stop offset="0" stop-color="#ffffff"/><stop offset="1" stop-color="#c4d0ee"/></linearGradient></defs><path d="M1.5 1.5h8.5l2.5 2.5v11.5h-11z" fill="url(#hg)"/><path d="M1.5 15.5V1.5h8.5" fill="none" stroke="#a8b2c4"/><path d="M10 1.5l2.5 2.5v11.5h-11" fill="none" stroke="#3a4460"/><path d="M10 1.5v2.5h2.5" fill="#fff" stroke="#8090b0" stroke-width="0.7"/><path d="M5.2 5v7.5M5.2 8.6c0.5-1.6 3.8-1.6 3.8 0.4v3.5" fill="none" stroke="#1a4a9a" stroke-width="1.4"/></svg>
<div class="t" style="left:89px;top:75px;">caps.h</div>
<svg class="a" style="left:69px;top:91px" width="14" height="17" viewBox="0 0 14 17"><defs><linearGradient id="hg" x1="0" y1="0" x2="1" y2="1"><stop offset="0" stop-color="#ffffff"/><stop offset="1" stop-color="#c4d0ee"/></linearGradient></defs><path d="M1.5 1.5h8.5l2.5 2.5v11.5h-11z" fill="url(#hg)"/><path d="M1.5 15.5V1.5h8.5" fill="none" stroke="#a8b2c4"/><path d="M10 1.5l2.5 2.5v11.5h-11" fill="none" stroke="#3a4460"/><path d="M10 1.5v2.5h2.5" fill="#fff" stroke="#8090b0" stroke-width="0.7"/><path d="M5.2 5v7.5M5.2 8.6c0.5-1.6 3.8-1.6 3.8 0.4v3.5" fill="none" stroke="#1a4a9a" stroke-width="1.4"/></svg>
<div class="t" style="left:89px;top:93px;">Crealysm_audio.h</div>
<svg class="a" style="left:69px;top:109px" width="14" height="17" viewBox="0 0 14 17"><defs><linearGradient id="hg" x1="0" y1="0" x2="1" y2="1"><stop offset="0" stop-color="#ffffff"/><stop offset="1" stop-color="#c4d0ee"/></linearGradient></defs><path d="M1.5 1.5h8.5l2.5 2.5v11.5h-11z" fill="url(#hg)"/><path d="M1.5 15.5V1.5h8.5" fill="none" stroke="#a8b2c4"/><path d="M10 1.5l2.5 2.5v11.5h-11" fill="none" stroke="#3a4460"/><path d="M10 1.5v2.5h2.5" fill="#fff" stroke="#8090b0" stroke-width="0.7"/><path d="M5.2 5v7.5M5.2 8.6c0.5-1.6 3.8-1.6 3.8 0.4v3.5" fill="none" stroke="#1a4a9a" stroke-width="1.4"/></svg>
<div class="t" style="left:89px;top:111px;">Crealysm_audio_io.h</div>
<svg class="a" style="left:69px;top:127px" width="14" height="17" viewBox="0 0 14 17"><defs><linearGradient id="hg" x1="0" y1="0" x2="1" y2="1"><stop offset="0" stop-color="#ffffff"/><stop offset="1" stop-color="#c4d0ee"/></linearGradient></defs><path d="M1.5 1.5h8.5l2.5 2.5v11.5h-11z" fill="url(#hg)"/><path d="M1.5 15.5V1.5h8.5" fill="none" stroke="#a8b2c4"/><path d="M10 1.5l2.5 2.5v11.5h-11" fill="none" stroke="#3a4460"/><path d="M10 1.5v2.5h2.5" fill="#fff" stroke="#8090b0" stroke-width="0.7"/><path d="M5.2 5v7.5M5.2 8.6c0.5-1.6 3.8-1.6 3.8 0.4v3.5" fill="none" stroke="#1a4a9a" stroke-width="1.4"/></svg>
<div class="t" style="left:89px;top:129px;">Crealysm_camanim.h</div>
<svg class="a" style="left:69px;top:145px" width="14" height="17" viewBox="0 0 14 17"><defs><linearGradient id="hg" x1="0" y1="0" x2="1" y2="1"><stop offset="0" stop-color="#ffffff"/><stop offset="1" stop-color="#c4d0ee"/></linearGradient></defs><path d="M1.5 1.5h8.5l2.5 2.5v11.5h-11z" fill="url(#hg)"/><path d="M1.5 15.5V1.5h8.5" fill="none" stroke="#a8b2c4"/><path d="M10 1.5l2.5 2.5v11.5h-11" fill="none" stroke="#3a4460"/><path d="M10 1.5v2.5h2.5" fill="#fff" stroke="#8090b0" stroke-width="0.7"/><path d="M5.2 5v7.5M5.2 8.6c0.5-1.6 3.8-1.6 3.8 0.4v3.5" fill="none" stroke="#1a4a9a" stroke-width="1.4"/></svg>
<div class="t" style="left:89px;top:147px;">Crealysm_d3d.h</div>
<svg class="a" style="left:69px;top:163px" width="14" height="17" viewBox="0 0 14 17"><defs><linearGradient id="hg" x1="0" y1="0" x2="1" y2="1"><stop offset="0" stop-color="#ffffff"/><stop offset="1" stop-color="#c4d0ee"/></linearGradient></defs><path d="M1.5 1.5h8.5l2.5 2.5v11.5h-11z" fill="url(#hg)"/><path d="M1.5 15.5V1.5h8.5" fill="none" stroke="#a8b2c4"/><path d="M10 1.5l2.5 2.5v11.5h-11" fill="none" stroke="#3a4460"/><path d="M10 1.5v2.5h2.5" fill="#fff" stroke="#8090b0" stroke-width="0.7"/><path d="M5.2 5v7.5M5.2 8.6c0.5-1.6 3.8-1.6 3.8 0.4v3.5" fill="none" stroke="#1a4a9a" stroke-width="1.4"/></svg>
<div class="t" style="left:89px;top:165px;">Crealysm_d3dcam.h</div>
<svg class="a" style="left:69px;top:181px" width="14" height="17" viewBox="0 0 14 17"><defs><linearGradient id="hg" x1="0" y1="0" x2="1" y2="1"><stop offset="0" stop-color="#ffffff"/><stop offset="1" stop-color="#c4d0ee"/></linearGradient></defs><path d="M1.5 1.5h8.5l2.5 2.5v11.5h-11z" fill="url(#hg)"/><path d="M1.5 15.5V1.5h8.5" fill="none" stroke="#a8b2c4"/><path d="M10 1.5l2.5 2.5v11.5h-11" fill="none" stroke="#3a4460"/><path d="M10 1.5v2.5h2.5" fill="#fff" stroke="#8090b0" stroke-width="0.7"/><path d="M5.2 5v7.5M5.2 8.6c0.5-1.6 3.8-1.6 3.8 0.4v3.5" fill="none" stroke="#1a4a9a" stroke-width="1.4"/></svg>
<div class="t" style="left:89px;top:183px;">Crealysm_d3dfont.h</div>
<svg class="a" style="left:69px;top:199px" width="14" height="17" viewBox="0 0 14 17"><defs><linearGradient id="hg" x1="0" y1="0" x2="1" y2="1"><stop offset="0" stop-color="#ffffff"/><stop offset="1" stop-color="#c4d0ee"/></linearGradient></defs><path d="M1.5 1.5h8.5l2.5 2.5v11.5h-11z" fill="url(#hg)"/><path d="M1.5 15.5V1.5h8.5" fill="none" stroke="#a8b2c4"/><path d="M10 1.5l2.5 2.5v11.5h-11" fill="none" stroke="#3a4460"/><path d="M10 1.5v2.5h2.5" fill="#fff" stroke="#8090b0" stroke-width="0.7"/><path d="M5.2 5v7.5M5.2 8.6c0.5-1.6 3.8-1.6 3.8 0.4v3.5" fill="none" stroke="#1a4a9a" stroke-width="1.4"/></svg>
<div class="t" style="left:89px;top:201px;">Crealysm_d3dlight.h</div>
<svg class="a" style="left:69px;top:217px" width="14" height="17" viewBox="0 0 14 17"><defs><linearGradient id="hg" x1="0" y1="0" x2="1" y2="1"><stop offset="0" stop-color="#ffffff"/><stop offset="1" stop-color="#c4d0ee"/></linearGradient></defs><path d="M1.5 1.5h8.5l2.5 2.5v11.5h-11z" fill="url(#hg)"/><path d="M1.5 15.5V1.5h8.5" fill="none" stroke="#a8b2c4"/><path d="M10 1.5l2.5 2.5v11.5h-11" fill="none" stroke="#3a4460"/><path d="M10 1.5v2.5h2.5" fill="#fff" stroke="#8090b0" stroke-width="0.7"/><path d="M5.2 5v7.5M5.2 8.6c0.5-1.6 3.8-1.6 3.8 0.4v3.5" fill="none" stroke="#1a4a9a" stroke-width="1.4"/></svg>
<div class="t" style="left:89px;top:219px;">Crealysm_d3dmaterial.h</div>
<svg class="a" style="left:69px;top:235px" width="14" height="17" viewBox="0 0 14 17"><defs><linearGradient id="hg" x1="0" y1="0" x2="1" y2="1"><stop offset="0" stop-color="#ffffff"/><stop offset="1" stop-color="#c4d0ee"/></linearGradient></defs><path d="M1.5 1.5h8.5l2.5 2.5v11.5h-11z" fill="url(#hg)"/><path d="M1.5 15.5V1.5h8.5" fill="none" stroke="#a8b2c4"/><path d="M10 1.5l2.5 2.5v11.5h-11" fill="none" stroke="#3a4460"/><path d="M10 1.5v2.5h2.5" fill="#fff" stroke="#8090b0" stroke-width="0.7"/><path d="M5.2 5v7.5M5.2 8.6c0.5-1.6 3.8-1.6 3.8 0.4v3.5" fill="none" stroke="#1a4a9a" stroke-width="1.4"/></svg>
<div class="t" style="left:89px;top:237px;">Crealysm_d3dmesh.h</div>
<svg class="a" style="left:69px;top:253px" width="14" height="17" viewBox="0 0 14 17"><defs><linearGradient id="hg" x1="0" y1="0" x2="1" y2="1"><stop offset="0" stop-color="#ffffff"/><stop offset="1" stop-color="#c4d0ee"/></linearGradient></defs><path d="M1.5 1.5h8.5l2.5 2.5v11.5h-11z" fill="url(#hg)"/><path d="M1.5 15.5V1.5h8.5" fill="none" stroke="#a8b2c4"/><path d="M10 1.5l2.5 2.5v11.5h-11" fill="none" stroke="#3a4460"/><path d="M10 1.5v2.5h2.5" fill="#fff" stroke="#8090b0" stroke-width="0.7"/><path d="M5.2 5v7.5M5.2 8.6c0.5-1.6 3.8-1.6 3.8 0.4v3.5" fill="none" stroke="#1a4a9a" stroke-width="1.4"/></svg>
<div class="t" style="left:89px;top:255px;">Crealysm_d3dmeshinst.h</div>
<svg class="a" style="left:69px;top:271px" width="14" height="17" viewBox="0 0 14 17"><defs><linearGradient id="hg" x1="0" y1="0" x2="1" y2="1"><stop offset="0" stop-color="#ffffff"/><stop offset="1" stop-color="#c4d0ee"/></linearGradient></defs><path d="M1.5 1.5h8.5l2.5 2.5v11.5h-11z" fill="url(#hg)"/><path d="M1.5 15.5V1.5h8.5" fill="none" stroke="#a8b2c4"/><path d="M10 1.5l2.5 2.5v11.5h-11" fill="none" stroke="#3a4460"/><path d="M10 1.5v2.5h2.5" fill="#fff" stroke="#8090b0" stroke-width="0.7"/><path d="M5.2 5v7.5M5.2 8.6c0.5-1.6 3.8-1.6 3.8 0.4v3.5" fill="none" stroke="#1a4a9a" stroke-width="1.4"/></svg>
<div class="t" style="left:89px;top:273px;">Crealysm_d3drenderable.h</div>
<svg class="a" style="left:69px;top:289px" width="14" height="17" viewBox="0 0 14 17"><defs><linearGradient id="hg" x1="0" y1="0" x2="1" y2="1"><stop offset="0" stop-color="#ffffff"/><stop offset="1" stop-color="#c4d0ee"/></linearGradient></defs><path d="M1.5 1.5h8.5l2.5 2.5v11.5h-11z" fill="url(#hg)"/><path d="M1.5 15.5V1.5h8.5" fill="none" stroke="#a8b2c4"/><path d="M10 1.5l2.5 2.5v11.5h-11" fill="none" stroke="#3a4460"/><path d="M10 1.5v2.5h2.5" fill="#fff" stroke="#8090b0" stroke-width="0.7"/><path d="M5.2 5v7.5M5.2 8.6c0.5-1.6 3.8-1.6 3.8 0.4v3.5" fill="none" stroke="#1a4a9a" stroke-width="1.4"/></svg>
<div class="t" style="left:89px;top:291px;">Crealysm_d3dscene.h</div>
<svg class="a" style="left:69px;top:307px" width="14" height="17" viewBox="0 0 14 17"><defs><linearGradient id="hg" x1="0" y1="0" x2="1" y2="1"><stop offset="0" stop-color="#ffffff"/><stop offset="1" stop-color="#c4d0ee"/></linearGradient></defs><path d="M1.5 1.5h8.5l2.5 2.5v11.5h-11z" fill="url(#hg)"/><path d="M1.5 15.5V1.5h8.5" fill="none" stroke="#a8b2c4"/><path d="M10 1.5l2.5 2.5v11.5h-11" fill="none" stroke="#3a4460"/><path d="M10 1.5v2.5h2.5" fill="#fff" stroke="#8090b0" stroke-width="0.7"/><path d="M5.2 5v7.5M5.2 8.6c0.5-1.6 3.8-1.6 3.8 0.4v3.5" fill="none" stroke="#1a4a9a" stroke-width="1.4"/></svg>
<div class="t" style="left:89px;top:309px;">crealysm_d3dshader.h</div>
<svg class="a" style="left:69px;top:325px" width="14" height="17" viewBox="0 0 14 17"><defs><linearGradient id="hg" x1="0" y1="0" x2="1" y2="1"><stop offset="0" stop-color="#ffffff"/><stop offset="1" stop-color="#c4d0ee"/></linearGradient></defs><path d="M1.5 1.5h8.5l2.5 2.5v11.5h-11z" fill="url(#hg)"/><path d="M1.5 15.5V1.5h8.5" fill="none" stroke="#a8b2c4"/><path d="M10 1.5l2.5 2.5v11.5h-11" fill="none" stroke="#3a4460"/><path d="M10 1.5v2.5h2.5" fill="#fff" stroke="#8090b0" stroke-width="0.7"/><path d="M5.2 5v7.5M5.2 8.6c0.5-1.6 3.8-1.6 3.8 0.4v3.5" fill="none" stroke="#1a4a9a" stroke-width="1.4"/></svg>
<div class="t" style="left:89px;top:327px;">Crealysm_d3dskybox.h</div>
<svg class="a" style="left:69px;top:343px" width="14" height="17" viewBox="0 0 14 17"><defs><linearGradient id="hg" x1="0" y1="0" x2="1" y2="1"><stop offset="0" stop-color="#ffffff"/><stop offset="1" stop-color="#c4d0ee"/></linearGradient></defs><path d="M1.5 1.5h8.5l2.5 2.5v11.5h-11z" fill="url(#hg)"/><path d="M1.5 15.5V1.5h8.5" fill="none" stroke="#a8b2c4"/><path d="M10 1.5l2.5 2.5v11.5h-11" fill="none" stroke="#3a4460"/><path d="M10 1.5v2.5h2.5" fill="#fff" stroke="#8090b0" stroke-width="0.7"/><path d="M5.2 5v7.5M5.2 8.6c0.5-1.6 3.8-1.6 3.8 0.4v3.5" fill="none" stroke="#1a4a9a" stroke-width="1.4"/></svg>
<div class="t" style="left:89px;top:345px;">Crealysm_d3dsprite.h</div>
<svg class="a" style="left:69px;top:361px" width="14" height="17" viewBox="0 0 14 17"><defs><linearGradient id="hg" x1="0" y1="0" x2="1" y2="1"><stop offset="0" stop-color="#ffffff"/><stop offset="1" stop-color="#c4d0ee"/></linearGradient></defs><path d="M1.5 1.5h8.5l2.5 2.5v11.5h-11z" fill="url(#hg)"/><path d="M1.5 15.5V1.5h8.5" fill="none" stroke="#a8b2c4"/><path d="M10 1.5l2.5 2.5v11.5h-11" fill="none" stroke="#3a4460"/><path d="M10 1.5v2.5h2.5" fill="#fff" stroke="#8090b0" stroke-width="0.7"/><path d="M5.2 5v7.5M5.2 8.6c0.5-1.6 3.8-1.6 3.8 0.4v3.5" fill="none" stroke="#1a4a9a" stroke-width="1.4"/></svg>
<div class="t" style="left:89px;top:363px;">Crealysm_d3dstatemach.h</div>
<svg class="a" style="left:69px;top:379px" width="14" height="17" viewBox="0 0 14 17"><defs><linearGradient id="hg" x1="0" y1="0" x2="1" y2="1"><stop offset="0" stop-color="#ffffff"/><stop offset="1" stop-color="#c4d0ee"/></linearGradient></defs><path d="M1.5 1.5h8.5l2.5 2.5v11.5h-11z" fill="url(#hg)"/><path d="M1.5 15.5V1.5h8.5" fill="none" stroke="#a8b2c4"/><path d="M10 1.5l2.5 2.5v11.5h-11" fill="none" stroke="#3a4460"/><path d="M10 1.5v2.5h2.5" fill="#fff" stroke="#8090b0" stroke-width="0.7"/><path d="M5.2 5v7.5M5.2 8.6c0.5-1.6 3.8-1.6 3.8 0.4v3.5" fill="none" stroke="#1a4a9a" stroke-width="1.4"/></svg>
<div class="t" style="left:89px;top:381px;">Crealysm_dxhelper.h</div>
<svg class="a" style="left:69px;top:397px" width="14" height="17" viewBox="0 0 14 17"><defs><linearGradient id="hg" x1="0" y1="0" x2="1" y2="1"><stop offset="0" stop-color="#ffffff"/><stop offset="1" stop-color="#c4d0ee"/></linearGradient></defs><path d="M1.5 1.5h8.5l2.5 2.5v11.5h-11z" fill="url(#hg)"/><path d="M1.5 15.5V1.5h8.5" fill="none" stroke="#a8b2c4"/><path d="M10 1.5l2.5 2.5v11.5h-11" fill="none" stroke="#3a4460"/><path d="M10 1.5v2.5h2.5" fill="#fff" stroke="#8090b0" stroke-width="0.7"/><path d="M5.2 5v7.5M5.2 8.6c0.5-1.6 3.8-1.6 3.8 0.4v3.5" fill="none" stroke="#1a4a9a" stroke-width="1.4"/></svg>
<div class="t" style="left:89px;top:399px;">Crealysm_dxinput.h</div>
<svg class="a" style="left:69px;top:415px" width="14" height="17" viewBox="0 0 14 17"><defs><linearGradient id="hg" x1="0" y1="0" x2="1" y2="1"><stop offset="0" stop-color="#ffffff"/><stop offset="1" stop-color="#c4d0ee"/></linearGradient></defs><path d="M1.5 1.5h8.5l2.5 2.5v11.5h-11z" fill="url(#hg)"/><path d="M1.5 15.5V1.5h8.5" fill="none" stroke="#a8b2c4"/><path d="M10 1.5l2.5 2.5v11.5h-11" fill="none" stroke="#3a4460"/><path d="M10 1.5v2.5h2.5" fill="#fff" stroke="#8090b0" stroke-width="0.7"/><path d="M5.2 5v7.5M5.2 8.6c0.5-1.6 3.8-1.6 3.8 0.4v3.5" fill="none" stroke="#1a4a9a" stroke-width="1.4"/></svg>
<div class="t" style="left:89px;top:417px;">Crealysm_dxmath.h</div>
<svg class="a" style="left:69px;top:433px" width="14" height="17" viewBox="0 0 14 17"><defs><linearGradient id="hg" x1="0" y1="0" x2="1" y2="1"><stop offset="0" stop-color="#ffffff"/><stop offset="1" stop-color="#c4d0ee"/></linearGradient></defs><path d="M1.5 1.5h8.5l2.5 2.5v11.5h-11z" fill="url(#hg)"/><path d="M1.5 15.5V1.5h8.5" fill="none" stroke="#a8b2c4"/><path d="M10 1.5l2.5 2.5v11.5h-11" fill="none" stroke="#3a4460"/><path d="M10 1.5v2.5h2.5" fill="#fff" stroke="#8090b0" stroke-width="0.7"/><path d="M5.2 5v7.5M5.2 8.6c0.5-1.6 3.8-1.6 3.8 0.4v3.5" fill="none" stroke="#1a4a9a" stroke-width="1.4"/></svg>
<div class="t" style="left:89px;top:435px;">Crealysm_light.h</div>
<svg class="a" style="left:69px;top:451px" width="14" height="17" viewBox="0 0 14 17"><defs><linearGradient id="hg" x1="0" y1="0" x2="1" y2="1"><stop offset="0" stop-color="#ffffff"/><stop offset="1" stop-color="#c4d0ee"/></linearGradient></defs><path d="M1.5 1.5h8.5l2.5 2.5v11.5h-11z" fill="url(#hg)"/><path d="M1.5 15.5V1.5h8.5" fill="none" stroke="#a8b2c4"/><path d="M10 1.5l2.5 2.5v11.5h-11" fill="none" stroke="#3a4460"/><path d="M10 1.5v2.5h2.5" fill="#fff" stroke="#8090b0" stroke-width="0.7"/><path d="M5.2 5v7.5M5.2 8.6c0.5-1.6 3.8-1.6 3.8 0.4v3.5" fill="none" stroke="#1a4a9a" stroke-width="1.4"/></svg>
<div class="t" style="left:89px;top:453px;">Crealysm_math.h</div>
<svg class="a" style="left:69px;top:469px" width="14" height="17" viewBox="0 0 14 17"><defs><linearGradient id="hg" x1="0" y1="0" x2="1" y2="1"><stop offset="0" stop-color="#ffffff"/><stop offset="1" stop-color="#c4d0ee"/></linearGradient></defs><path d="M1.5 1.5h8.5l2.5 2.5v11.5h-11z" fill="url(#hg)"/><path d="M1.5 15.5V1.5h8.5" fill="none" stroke="#a8b2c4"/><path d="M10 1.5l2.5 2.5v11.5h-11" fill="none" stroke="#3a4460"/><path d="M10 1.5v2.5h2.5" fill="#fff" stroke="#8090b0" stroke-width="0.7"/><path d="M5.2 5v7.5M5.2 8.6c0.5-1.6 3.8-1.6 3.8 0.4v3.5" fill="none" stroke="#1a4a9a" stroke-width="1.4"/></svg>
<div class="t" style="left:89px;top:471px;">Crealysm_object.h</div>
<svg class="a" style="left:69px;top:487px" width="14" height="17" viewBox="0 0 14 17"><defs><linearGradient id="hg" x1="0" y1="0" x2="1" y2="1"><stop offset="0" stop-color="#ffffff"/><stop offset="1" stop-color="#c4d0ee"/></linearGradient></defs><path d="M1.5 1.5h8.5l2.5 2.5v11.5h-11z" fill="url(#hg)"/><path d="M1.5 15.5V1.5h8.5" fill="none" stroke="#a8b2c4"/><path d="M10 1.5l2.5 2.5v11.5h-11" fill="none" stroke="#3a4460"/><path d="M10 1.5v2.5h2.5" fill="#fff" stroke="#8090b0" stroke-width="0.7"/><path d="M5.2 5v7.5M5.2 8.6c0.5-1.6 3.8-1.6 3.8 0.4v3.5" fill="none" stroke="#1a4a9a" stroke-width="1.4"/></svg>
<div class="t" style="left:89px;top:489px;">Crealysm_player.h</div>
<svg class="a" style="left:69px;top:505px" width="14" height="17" viewBox="0 0 14 17"><defs><linearGradient id="hg" x1="0" y1="0" x2="1" y2="1"><stop offset="0" stop-color="#ffffff"/><stop offset="1" stop-color="#c4d0ee"/></linearGradient></defs><path d="M1.5 1.5h8.5l2.5 2.5v11.5h-11z" fill="url(#hg)"/><path d="M1.5 15.5V1.5h8.5" fill="none" stroke="#a8b2c4"/><path d="M10 1.5l2.5 2.5v11.5h-11" fill="none" stroke="#3a4460"/><path d="M10 1.5v2.5h2.5" fill="#fff" stroke="#8090b0" stroke-width="0.7"/><path d="M5.2 5v7.5M5.2 8.6c0.5-1.6 3.8-1.6 3.8 0.4v3.5" fill="none" stroke="#1a4a9a" stroke-width="1.4"/></svg>
<div class="t" style="left:89px;top:507px;">Crealysm_renderqueue.h</div>
<svg class="a" style="left:69px;top:523px" width="14" height="17" viewBox="0 0 14 17"><defs><linearGradient id="hg" x1="0" y1="0" x2="1" y2="1"><stop offset="0" stop-color="#ffffff"/><stop offset="1" stop-color="#c4d0ee"/></linearGradient></defs><path d="M1.5 1.5h8.5l2.5 2.5v11.5h-11z" fill="url(#hg)"/><path d="M1.5 15.5V1.5h8.5" fill="none" stroke="#a8b2c4"/><path d="M10 1.5l2.5 2.5v11.5h-11" fill="none" stroke="#3a4460"/><path d="M10 1.5v2.5h2.5" fill="#fff" stroke="#8090b0" stroke-width="0.7"/><path d="M5.2 5v7.5M5.2 8.6c0.5-1.6 3.8-1.6 3.8 0.4v3.5" fill="none" stroke="#1a4a9a" stroke-width="1.4"/></svg>
<div class="t" style="left:89px;top:525px;">Crealysm_scene.h</div>
<svg class="a" style="left:69px;top:541px" width="14" height="17" viewBox="0 0 14 17"><defs><linearGradient id="hg" x1="0" y1="0" x2="1" y2="1"><stop offset="0" stop-color="#ffffff"/><stop offset="1" stop-color="#c4d0ee"/></linearGradient></defs><path d="M1.5 1.5h8.5l2.5 2.5v11.5h-11z" fill="url(#hg)"/><path d="M1.5 15.5V1.5h8.5" fill="none" stroke="#a8b2c4"/><path d="M10 1.5l2.5 2.5v11.5h-11" fill="none" stroke="#3a4460"/><path d="M10 1.5v2.5h2.5" fill="#fff" stroke="#8090b0" stroke-width="0.7"/><path d="M5.2 5v7.5M5.2 8.6c0.5-1.6 3.8-1.6 3.8 0.4v3.5" fill="none" stroke="#1a4a9a" stroke-width="1.4"/></svg>
<div class="t" style="left:89px;top:543px;">Crealysm_sprite.h</div>
<svg class="a" style="left:69px;top:559px" width="14" height="17" viewBox="0 0 14 17"><defs><linearGradient id="hg" x1="0" y1="0" x2="1" y2="1"><stop offset="0" stop-color="#ffffff"/><stop offset="1" stop-color="#c4d0ee"/></linearGradient></defs><path d="M1.5 1.5h8.5l2.5 2.5v11.5h-11z" fill="url(#hg)"/><path d="M1.5 15.5V1.5h8.5" fill="none" stroke="#a8b2c4"/><path d="M10 1.5l2.5 2.5v11.5h-11" fill="none" stroke="#3a4460"/><path d="M10 1.5v2.5h2.5" fill="#fff" stroke="#8090b0" stroke-width="0.7"/><path d="M5.2 5v7.5M5.2 8.6c0.5-1.6 3.8-1.6 3.8 0.4v3.5" fill="none" stroke="#1a4a9a" stroke-width="1.4"/></svg>
<div class="t" style="left:89px;top:561px;">Crealysm_text.h</div>
<svg class="a" style="left:69px;top:577px" width="14" height="17" viewBox="0 0 14 17"><defs><linearGradient id="hg" x1="0" y1="0" x2="1" y2="1"><stop offset="0" stop-color="#ffffff"/><stop offset="1" stop-color="#c4d0ee"/></linearGradient></defs><path d="M1.5 1.5h8.5l2.5 2.5v11.5h-11z" fill="url(#hg)"/><path d="M1.5 15.5V1.5h8.5" fill="none" stroke="#a8b2c4"/><path d="M10 1.5l2.5 2.5v11.5h-11" fill="none" stroke="#3a4460"/><path d="M10 1.5v2.5h2.5" fill="#fff" stroke="#8090b0" stroke-width="0.7"/><path d="M5.2 5v7.5M5.2 8.6c0.5-1.6 3.8-1.6 3.8 0.4v3.5" fill="none" stroke="#1a4a9a" stroke-width="1.4"/></svg>
<div class="t" style="left:89px;top:579px;">Crealysm_timer.h</div>
<svg class="a" style="left:69px;top:595px" width="14" height="17" viewBox="0 0 14 17"><defs><linearGradient id="hg" x1="0" y1="0" x2="1" y2="1"><stop offset="0" stop-color="#ffffff"/><stop offset="1" stop-color="#c4d0ee"/></linearGradient></defs><path d="M1.5 1.5h8.5l2.5 2.5v11.5h-11z" fill="url(#hg)"/><path d="M1.5 15.5V1.5h8.5" fill="none" stroke="#a8b2c4"/><path d="M10 1.5l2.5 2.5v11.5h-11" fill="none" stroke="#3a4460"/><path d="M10 1.5v2.5h2.5" fill="#fff" stroke="#8090b0" stroke-width="0.7"/><path d="M5.2 5v7.5M5.2 8.6c0.5-1.6 3.8-1.6 3.8 0.4v3.5" fill="none" stroke="#1a4a9a" stroke-width="1.4"/></svg>
<div class="t" style="left:89px;top:597px;">main.h</div>
<svg class="a" style="left:49px;top:616px" width="17" height="14" viewBox="0 0 17 14"><defs><linearGradient id="fgc" x1="0" y1="0" x2="1" y2="1"><stop offset="0" stop-color="#fff2b0"/><stop offset="1" stop-color="#e0a020"/></linearGradient></defs><path d="M1.5 1.5h5l1 1.5h8v9.5h-14z" fill="#f4dc90" stroke="#a07a20"/><path d="M2 5h13v7h-13z" fill="url(#fgc)"/></svg>
<div class="t" style="left:70px;top:615px;">Resource Files</div>
<svg class="a" style="left:28px;top:638px" width="8" height="8" viewBox="0 0 8 8"><path d="M6.5 1 L6.5 6.5 L1 6.5z" fill="#303030"/></svg>
<svg class="a" style="left:49px;top:634px" width="17" height="14" viewBox="0 0 17 14"><defs><linearGradient id="fgo" x1="0" y1="0" x2="0" y2="1"><stop offset="0" stop-color="#fff0a8"/><stop offset="1" stop-color="#e8b030"/></linearGradient></defs><path d="M1.5 1.5h5l1 1.5h6v9h-12z" fill="#f8eec0" stroke="#a07a20"/><path d="M3 5.5h13l-2.5 7h-12z" fill="url(#fgo)" stroke="#a07a20"/></svg>
<div class="t" style="left:70px;top:633px;">Source Files</div>
<svg class="a" style="left:68px;top:649px" width="17" height="18" viewBox="0 0 17 18"><defs><linearGradient id="dg" x1="0" y1="0" x2="1" y2="1"><stop offset="0" stop-color="#ffffff"/><stop offset="1" stop-color="#c4d0e8"/></linearGradient></defs><path d="M4.5 1.5h7.5l2.5 2.5v11.5h-10z" fill="url(#dg)"/><path d="M4.5 15.5V1.5h7.5" fill="none" stroke="#a8b2c4"/><path d="M12 1.5l2.5 2.5v11.5h-10" fill="none" stroke="#3a4460"/><path d="M12 1.5v2.5h2.5" fill="#fff" stroke="#8090b0" stroke-width="0.7"/><path d="M7 5.2 C6 4.3 1.5 4 1.5 8 C1.5 12 6 11.7 7 10.8" fill="none" stroke="#1a4aa8" stroke-width="1.9"/><path d="M7.6 7.3h3.4v1.4h-3.4zM8.6 6.3h1.4v3.4h-1.4zM11.2 7.3h3.4v1.4h-3.4zM12.2 6.3h1.4v3.4h-1.4z" fill="#1a4aa8"/></svg>
<div class="t" style="left:89px;top:651px;">Crealysm_audio.cpp</div>
<svg class="a" style="left:68px;top:667px" width="17" height="18" viewBox="0 0 17 18"><defs><linearGradient id="dg" x1="0" y1="0" x2="1" y2="1"><stop offset="0" stop-color="#ffffff"/><stop offset="1" stop-color="#c4d0e8"/></linearGradient></defs><path d="M4.5 1.5h7.5l2.5 2.5v11.5h-10z" fill="url(#dg)"/><path d="M4.5 15.5V1.5h7.5" fill="none" stroke="#a8b2c4"/><path d="M12 1.5l2.5 2.5v11.5h-10" fill="none" stroke="#3a4460"/><path d="M12 1.5v2.5h2.5" fill="#fff" stroke="#8090b0" stroke-width="0.7"/><path d="M7 5.2 C6 4.3 1.5 4 1.5 8 C1.5 12 6 11.7 7 10.8" fill="none" stroke="#1a4aa8" stroke-width="1.9"/><path d="M7.6 7.3h3.4v1.4h-3.4zM8.6 6.3h1.4v3.4h-1.4zM11.2 7.3h3.4v1.4h-3.4zM12.2 6.3h1.4v3.4h-1.4z" fill="#1a4aa8"/></svg>
<div class="t" style="left:89px;top:669px;">Crealysm_audio_io.cpp</div>
<svg class="a" style="left:68px;top:685px" width="17" height="18" viewBox="0 0 17 18"><defs><linearGradient id="dg" x1="0" y1="0" x2="1" y2="1"><stop offset="0" stop-color="#ffffff"/><stop offset="1" stop-color="#c4d0e8"/></linearGradient></defs><path d="M4.5 1.5h7.5l2.5 2.5v11.5h-10z" fill="url(#dg)"/><path d="M4.5 15.5V1.5h7.5" fill="none" stroke="#a8b2c4"/><path d="M12 1.5l2.5 2.5v11.5h-10" fill="none" stroke="#3a4460"/><path d="M12 1.5v2.5h2.5" fill="#fff" stroke="#8090b0" stroke-width="0.7"/><path d="M7 5.2 C6 4.3 1.5 4 1.5 8 C1.5 12 6 11.7 7 10.8" fill="none" stroke="#1a4aa8" stroke-width="1.9"/><path d="M7.6 7.3h3.4v1.4h-3.4zM8.6 6.3h1.4v3.4h-1.4zM11.2 7.3h3.4v1.4h-3.4zM12.2 6.3h1.4v3.4h-1.4z" fill="#1a4aa8"/></svg>
<div class="t" style="left:89px;top:687px;">Crealysm_camanim.cpp</div>
<svg class="a" style="left:68px;top:703px" width="17" height="18" viewBox="0 0 17 18"><defs><linearGradient id="dg" x1="0" y1="0" x2="1" y2="1"><stop offset="0" stop-color="#ffffff"/><stop offset="1" stop-color="#c4d0e8"/></linearGradient></defs><path d="M4.5 1.5h7.5l2.5 2.5v11.5h-10z" fill="url(#dg)"/><path d="M4.5 15.5V1.5h7.5" fill="none" stroke="#a8b2c4"/><path d="M12 1.5l2.5 2.5v11.5h-10" fill="none" stroke="#3a4460"/><path d="M12 1.5v2.5h2.5" fill="#fff" stroke="#8090b0" stroke-width="0.7"/><path d="M7 5.2 C6 4.3 1.5 4 1.5 8 C1.5 12 6 11.7 7 10.8" fill="none" stroke="#1a4aa8" stroke-width="1.9"/><path d="M7.6 7.3h3.4v1.4h-3.4zM8.6 6.3h1.4v3.4h-1.4zM11.2 7.3h3.4v1.4h-3.4zM12.2 6.3h1.4v3.4h-1.4z" fill="#1a4aa8"/></svg>
<div class="t" style="left:89px;top:705px;">Crealysm_d3d.cpp</div>
<svg class="a" style="left:68px;top:721px" width="17" height="18" viewBox="0 0 17 18"><defs><linearGradient id="dg" x1="0" y1="0" x2="1" y2="1"><stop offset="0" stop-color="#ffffff"/><stop offset="1" stop-color="#c4d0e8"/></linearGradient></defs><path d="M4.5 1.5h7.5l2.5 2.5v11.5h-10z" fill="url(#dg)"/><path d="M4.5 15.5V1.5h7.5" fill="none" stroke="#a8b2c4"/><path d="M12 1.5l2.5 2.5v11.5h-10" fill="none" stroke="#3a4460"/><path d="M12 1.5v2.5h2.5" fill="#fff" stroke="#8090b0" stroke-width="0.7"/><path d="M7 5.2 C6 4.3 1.5 4 1.5 8 C1.5 12 6 11.7 7 10.8" fill="none" stroke="#1a4aa8" stroke-width="1.9"/><path d="M7.6 7.3h3.4v1.4h-3.4zM8.6 6.3h1.4v3.4h-1.4zM11.2 7.3h3.4v1.4h-3.4zM12.2 6.3h1.4v3.4h-1.4z" fill="#1a4aa8"/></svg>
<div class="t" style="left:89px;top:723px;">Crealysm_d3dcam.cpp</div>
<svg class="a" style="left:68px;top:739px" width="17" height="18" viewBox="0 0 17 18"><defs><linearGradient id="dg" x1="0" y1="0" x2="1" y2="1"><stop offset="0" stop-color="#ffffff"/><stop offset="1" stop-color="#c4d0e8"/></linearGradient></defs><path d="M4.5 1.5h7.5l2.5 2.5v11.5h-10z" fill="url(#dg)"/><path d="M4.5 15.5V1.5h7.5" fill="none" stroke="#a8b2c4"/><path d="M12 1.5l2.5 2.5v11.5h-10" fill="none" stroke="#3a4460"/><path d="M12 1.5v2.5h2.5" fill="#fff" stroke="#8090b0" stroke-width="0.7"/><path d="M7 5.2 C6 4.3 1.5 4 1.5 8 C1.5 12 6 11.7 7 10.8" fill="none" stroke="#1a4aa8" stroke-width="1.9"/><path d="M7.6 7.3h3.4v1.4h-3.4zM8.6 6.3h1.4v3.4h-1.4zM11.2 7.3h3.4v1.4h-3.4zM12.2 6.3h1.4v3.4h-1.4z" fill="#1a4aa8"/></svg>
<div class="t" style="left:89px;top:741px;">Crealysm_d3dfont.cpp</div>
<svg class="a" style="left:68px;top:757px" width="17" height="18" viewBox="0 0 17 18"><defs><linearGradient id="dg" x1="0" y1="0" x2="1" y2="1"><stop offset="0" stop-color="#ffffff"/><stop offset="1" stop-color="#c4d0e8"/></linearGradient></defs><path d="M4.5 1.5h7.5l2.5 2.5v11.5h-10z" fill="url(#dg)"/><path d="M4.5 15.5V1.5h7.5" fill="none" stroke="#a8b2c4"/><path d="M12 1.5l2.5 2.5v11.5h-10" fill="none" stroke="#3a4460"/><path d="M12 1.5v2.5h2.5" fill="#fff" stroke="#8090b0" stroke-width="0.7"/><path d="M7 5.2 C6 4.3 1.5 4 1.5 8 C1.5 12 6 11.7 7 10.8" fill="none" stroke="#1a4aa8" stroke-width="1.9"/><path d="M7.6 7.3h3.4v1.4h-3.4zM8.6 6.3h1.4v3.4h-1.4zM11.2 7.3h3.4v1.4h-3.4zM12.2 6.3h1.4v3.4h-1.4z" fill="#1a4aa8"/></svg>
<div class="t" style="left:89px;top:759px;">Crealysm_d3dlight.cpp</div>
<svg class="a" style="left:68px;top:775px" width="17" height="18" viewBox="0 0 17 18"><defs><linearGradient id="dg" x1="0" y1="0" x2="1" y2="1"><stop offset="0" stop-color="#ffffff"/><stop offset="1" stop-color="#c4d0e8"/></linearGradient></defs><path d="M4.5 1.5h7.5l2.5 2.5v11.5h-10z" fill="url(#dg)"/><path d="M4.5 15.5V1.5h7.5" fill="none" stroke="#a8b2c4"/><path d="M12 1.5l2.5 2.5v11.5h-10" fill="none" stroke="#3a4460"/><path d="M12 1.5v2.5h2.5" fill="#fff" stroke="#8090b0" stroke-width="0.7"/><path d="M7 5.2 C6 4.3 1.5 4 1.5 8 C1.5 12 6 11.7 7 10.8" fill="none" stroke="#1a4aa8" stroke-width="1.9"/><path d="M7.6 7.3h3.4v1.4h-3.4zM8.6 6.3h1.4v3.4h-1.4zM11.2 7.3h3.4v1.4h-3.4zM12.2 6.3h1.4v3.4h-1.4z" fill="#1a4aa8"/></svg>
<div class="t" style="left:89px;top:777px;">Crealysm_d3dmaterial.cpp</div>
<svg class="a" style="left:68px;top:793px" width="17" height="18" viewBox="0 0 17 18"><defs><linearGradient id="dg" x1="0" y1="0" x2="1" y2="1"><stop offset="0" stop-color="#ffffff"/><stop offset="1" stop-color="#c4d0e8"/></linearGradient></defs><path d="M4.5 1.5h7.5l2.5 2.5v11.5h-10z" fill="url(#dg)"/><path d="M4.5 15.5V1.5h7.5" fill="none" stroke="#a8b2c4"/><path d="M12 1.5l2.5 2.5v11.5h-10" fill="none" stroke="#3a4460"/><path d="M12 1.5v2.5h2.5" fill="#fff" stroke="#8090b0" stroke-width="0.7"/><path d="M7 5.2 C6 4.3 1.5 4 1.5 8 C1.5 12 6 11.7 7 10.8" fill="none" stroke="#1a4aa8" stroke-width="1.9"/><path d="M7.6 7.3h3.4v1.4h-3.4zM8.6 6.3h1.4v3.4h-1.4zM11.2 7.3h3.4v1.4h-3.4zM12.2 6.3h1.4v3.4h-1.4z" fill="#1a4aa8"/></svg>
<div class="t" style="left:89px;top:795px;">Crealysm_d3dmesh.cpp</div>
<svg class="a" style="left:68px;top:811px" width="17" height="18" viewBox="0 0 17 18"><defs><linearGradient id="dg" x1="0" y1="0" x2="1" y2="1"><stop offset="0" stop-color="#ffffff"/><stop offset="1" stop-color="#c4d0e8"/></linearGradient></defs><path d="M4.5 1.5h7.5l2.5 2.5v11.5h-10z" fill="url(#dg)"/><path d="M4.5 15.5V1.5h7.5" fill="none" stroke="#a8b2c4"/><path d="M12 1.5l2.5 2.5v11.5h-10" fill="none" stroke="#3a4460"/><path d="M12 1.5v2.5h2.5" fill="#fff" stroke="#8090b0" stroke-width="0.7"/><path d="M7 5.2 C6 4.3 1.5 4 1.5 8 C1.5 12 6 11.7 7 10.8" fill="none" stroke="#1a4aa8" stroke-width="1.9"/><path d="M7.6 7.3h3.4v1.4h-3.4zM8.6 6.3h1.4v3.4h-1.4zM11.2 7.3h3.4v1.4h-3.4zM12.2 6.3h1.4v3.4h-1.4z" fill="#1a4aa8"/></svg>
<div class="t" style="left:89px;top:813px;">Crealysm_d3dmeshinst.cpp</div>
</div>
<div class="a" style="left:6px;top:990px;width:118px;height:21px;background:#fff;border-radius:0 0 3px 3px"></div>
<svg class="a" style="left:10px;top:992px" width="18" height="19" viewBox="0 0 18 19"><rect x="5.5" y="1.5" width="11" height="11" fill="#f4f8fe" stroke="#5a7ab8"/><rect x="6" y="2" width="10" height="2" fill="#6a96d8"/><path d="M1 6.5h4l1 1h3v5h-8z" fill="#f0d070" stroke="#a08030" stroke-width="0.8"/><circle cx="9.5" cy="11" r="3.2" fill="#d8ecfc" stroke="#4a5a70" stroke-width="1.2"/><path d="M12 13.5l3 3.5" stroke="#c09020" stroke-width="2"/></svg>
<div class="t" style="left:31px;top:994px;">Solution Explorer</div>
<svg class="a" style="left:129px;top:992px" width="20" height="19" viewBox="0 0 20 19"><rect x="1.5" y="2.5" width="11" height="9" fill="#fff" stroke="#5a7ab8"/><path d="M3 5 l4 -3 l4 4 l-4 3z" fill="#f0d040" stroke="#a08020" stroke-width="0.7"/><path d="M10 7 l4 -3 l4 4 l-4 3z" fill="#e070e0" stroke="#904090" stroke-width="0.7"/><path d="M10 14 l3 -2.5 l3 3 l-3 2.5z" fill="#5aa0f0" stroke="#2a60b0" stroke-width="0.7"/><path d="M12 10v3" stroke="#6a7a98"/></svg>
<div class="t" style="left:150px;top:994px;color:#fff">Class View</div>
<div class="t" style="left:299px;top:129px;color:#fff">Crealysm_dxmath.h</div>
<div class="t" style="left:434px;top:129px;color:#fff">Crealysm_d3dcam.cpp</div>
<div class="t" style="left:585px;top:129px;color:#fff">main.cpp</div>
<div class="t" style="left:666px;top:129px;color:#fff">Crealysm_d3dmeshinst.cpp</div>
<div class="t" style="left:988px;top:129px;color:#fff">Crealysm_d3dscene.cpp</div>
<div class="a" style="left:837px;top:125px;width:147px;height:22px;background:linear-gradient(#eef1f6,#dde3ec 50%,#d3dae6);border-radius:2px 2px 0 0"></div>
<div class="t" style="left:841px;top:129px;">Crealysm_dxmath.cpp</div>
<svg class="a" style="left:967px;top:130px" width="11" height="11" viewBox="0 0 11 11"><path d="M1.5 1.5L9.5 9.5M9.5 1.5L1.5 9.5" stroke="#505a6a" stroke-width="1.3"/></svg>
<div class="a" style="left:1899px;top:133px;width:0;height:0;border-left:5px solid transparent;border-right:5px solid transparent;border-top:5px solid #cfd6e5"></div>
<div class="a" style="left:294px;top:145px;width:1619px;height:4px;background:#d3dae6;border-radius:3px 3px 0 0"></div>
<div class="a" style="left:294px;top:149px;width:1619px;height:1px;background:#2e3f5d"></div>
<div class="a" style="left:294px;top:150px;width:1619px;height:21px;background:#f0f2f7;border-left:1px solid #c8d0dc"></div>
<div class="a" style="left:1103px;top:151px;width:2px;height:19px;background:#7a8494"></div>
<svg class="a" style="left:301px;top:154px" width="14" height="12" viewBox="0 0 14 12"><path d="M1 11 C2 5 6 3 10 4 L10 1 L13 5.5 L10 10 L10 7 C6 6 3 8 1 11z" fill="#3a6ad8"/></svg>
<div class="t" style="left:317px;top:154px;letter-spacing:-0.3px">Crealysm_dxmath::AABBWORLD</div>
<div class="a" style="left:1094px;top:160px;width:0;height:0;border-left:3px solid transparent;border-right:3px solid transparent;border-top:3px solid #000"></div>
<svg class="a" style="left:1110px;top:152px" width="16" height="14" viewBox="0 0 16 14"><path d="M1 4.5h4M1 6.5h4M1 8.5h4" stroke="#a0a8a0" stroke-width="0.9"/><path d="M8.5 1 L12.5 4.5 L8 8.5 L5 6z" fill="#f4a8f4"/><path d="M5 6 L8 8.5 L9 13 L5.5 9.5z" fill="#c060c8"/><path d="M12.5 4.5 L12.5 9.5 L9 13 L8 8.5z" fill="#8a2a98"/></svg>
<div class="t" style="left:1126px;top:154px;">Update(const OBB &amp; pOBB)</div>
<div class="a" style="left:1903px;top:160px;width:0;height:0;border-left:3px solid transparent;border-right:3px solid transparent;border-top:3px solid #000"></div>
<div class="a" style="left:294px;top:171px;width:1619px;height:1px;background:#2a3a56"></div>
<div class="a" style="left:294px;top:172px;width:1603px;height:469px;background:#fff"></div>
<div class="a" style="left:294px;top:172px;width:17px;height:469px;background:#ececec"></div>
<div class="a" style="left:311px;top:172px;width:2px;height:469px;background:#f6f6f6"></div>
<div class="a" style="left:313px;top:172px;width:5px;height:469px;background:#6ad86a"></div>
<div class="a" style="left:326px;top:172px;width:1px;height:469px;background:#a8a8a8"></div>
<div class="a" style="left:327px;top:178px;width:4px;height:1px;background:#a8a8a8"></div>
<div class="a" style="left:1897px;top:172px;width:16px;height:469px;background:linear-gradient(90deg,#e6e6e6,#f0f0f0 50%,#e6e6e6)"></div>
<div class="a" style="left:1897px;top:172px;width:16px;height:17px;background:linear-gradient(#f4f4f4,#dcdcdc);border:1px solid #a0a0a0"></div>
<svg class="a" style="left:1899px;top:174px" width="12" height="13" viewBox="0 0 12 13"><path d="M6 1v11M2 5.5h8M2 7.5h8" stroke="#000"/><path d="M3.5 3.5 L6 1 L8.5 3.5 M3.5 9.5 L6 12 L8.5 9.5" fill="none" stroke="#000" stroke-width="1.3"/></svg>
<div class="a" style="left:1901px;top:194px;width:0;height:0;border-left:4px solid transparent;border-right:4px solid transparent;border-bottom:4px solid #a0a0a0"></div>
<div class="a" style="left:1898px;top:395px;width:15px;height:26px;background:linear-gradient(90deg,#f4f4f4,#e2e2e2 50%,#cdcdcd);border:1px solid #989898;border-radius:2px"></div>
<svg class="a" style="left:1901px;top:403px" width="9" height="8" viewBox="0 0 9 8"><path d="M1 1.5h7M1 3.5h7M1 5.5h7" stroke="#404040"/></svg>
<div class="a" style="left:1901px;top:628px;width:0;height:0;border-left:4px solid transparent;border-right:4px solid transparent;border-top:4px solid #707070"></div>
<div class="a" style="left:294px;top:641px;width:1603px;height:17px;background:#f2f2f2"></div>
<div class="a" style="left:294px;top:641px;width:59px;height:17px;background:#fff"></div>
<div class="t" style="left:298px;top:643px;">100 %</div>
<div class="a" style="left:344px;top:648px;width:0;height:0;border-left:3px solid transparent;border-right:3px solid transparent;border-top:3px solid #000"></div>
<div class="a" style="left:357px;top:645px;width:0;height:0;border-top:4px solid transparent;border-bottom:4px solid transparent;border-right:4px solid #909090"></div>
<div class="a" style="left:1886px;top:645px;width:0;height:0;border-top:4px solid transparent;border-bottom:4px solid transparent;border-left:4px solid #707070"></div>
<div class="a" style="left:1897px;top:641px;width:16px;height:17px;background:#fff"></div>
<div class="a" style="left:294px;top:658px;width:1619px;height:4px;background:#cfd6e5;border-radius:0 0 2px 2px"></div>
<div class="a" style="left:327px;top:172px;width:1570px;height:469px;overflow:hidden">
<div class="c" style="left:5px;top:-8px"><span class="cm">    */</span></div>
<div class="c" style="left:5px;top:24px">    D3DXVECTOR3 OBBcorners[8];</div>
<div class="c" style="left:5px;top:56px">    OBBcorners[0] = -pOBB.XHalfExtent -pOBB.YHalfExtent -pOBB.ZHalfExtent;</div>
<div class="c" style="left:5px;top:72px">    OBBcorners[1] = +pOBB.XHalfExtent -pOBB.YHalfExtent -pOBB.ZHalfExtent;</div>
<div class="c" style="left:5px;top:88px">    OBBcorners[2] = +pOBB.XHalfExtent +pOBB.YHalfExtent -pOBB.ZHalfExtent;</div>
<div class="c" style="left:5px;top:104px">    OBBcorners[3] = -pOBB.XHalfExtent +pOBB.YHalfExtent -pOBB.ZHalfExtent;</div>
<div class="c" style="left:5px;top:136px">    OBBcorners[4] = -pOBB.XHalfExtent -pOBB.YHalfExtent +pOBB.ZHalfExtent;</div>
<div class="c" style="left:5px;top:152px">    OBBcorners[5] = +pOBB.XHalfExtent -pOBB.YHalfExtent +pOBB.ZHalfExtent;</div>
<div class="c" style="left:5px;top:168px">    OBBcorners[6] = +pOBB.XHalfExtent +pOBB.YHalfExtent +pOBB.ZHalfExtent;</div>
<div class="c" style="left:5px;top:184px">    OBBcorners[7] = -pOBB.XHalfExtent +pOBB.YHalfExtent +pOBB.ZHalfExtent;</div>
<div class="c" style="left:5px;top:216px"><span class="cm">//  2. Find the min and max X Y Z of the corners to get AABB in worldspace</span></div>
<div class="c" style="left:5px;top:248px">    _Min = OBBcorners[0];</div>
<div class="c" style="left:5px;top:264px">    _Max = _Min;</div>
<div class="c" style="left:5px;top:296px">    <span class="kw">for</span>(<span class="kw">int</span> j=1;j&lt;8;++j)</div>
<div class="c" style="left:5px;top:312px">    {</div>
<div class="c" style="left:5px;top:328px">        _Min = D3DXVECTOR3((std::min)(OBBcorners[j].x, _Min.x),</div>
<div class="c" style="left:5px;top:344px">                           (std::min)(OBBcorners[j].y, _Min.y),</div>
<div class="c" style="left:5px;top:360px">                           (std::min)(OBBcorners[j].z, _Min.z));</div>
<div class="c" style="left:5px;top:392px">        _Max = D3DXVECTOR3((std::max)(OBBcorners[j].x, _Max.x),</div>
<div class="c" style="left:5px;top:408px">                           (std::max)(OBBcorners[j].y, _Max.y),</div>
<div class="c" style="left:5px;top:424px">                           (std::max)(OBBcorners[j].z, _Max.z));</div>
<div class="c" style="left:5px;top:440px">    }</div>
<div class="c" style="left:5px;top:456px">}</div>
</div>
<svg class="a" style="left:295px;top:419px" width="15" height="15" viewBox="0 0 15 15"><defs><linearGradient id="bpg" x1="0" y1="0" x2="0" y2="1"><stop offset="0" stop-color="#f4a0a0"/><stop offset="1" stop-color="#c02818"/></linearGradient><linearGradient id="ayg" x1="0" y1="0" x2="1" y2="1"><stop offset="0" stop-color="#fff8a0"/><stop offset="1" stop-color="#f8e000"/></linearGradient></defs><circle cx="7.2" cy="7.3" r="6.2" fill="url(#bpg)" stroke="#902810" stroke-width="0.6"/><path d="M0.8 5 h5.5 v-3.8 l7.6 6.1 l-7.6 6.1 v-3.8 h-5.5z" fill="url(#ayg)" stroke="#c09000" stroke-width="0.5"/></svg>
<div class="a" style="left:294px;top:668px;width:1038px;height:19px;background:linear-gradient(#fffdf5 0,#fff6dc 35%,#fde6a6 50%,#fce19c 92%,#fdf3d8 100%);border-radius:2px 2px 0 0"></div>
<div class="t" style="left:296px;top:671px;color:#000">Autos</div>
<div class="a" style="left:1290px;top:675px;width:0;height:0;border-left:4px solid transparent;border-right:4px solid transparent;border-top:4px solid #4a3c10"></div>
<svg class="a" style="left:1304px;top:671px" width="10" height="13" viewBox="0 0 10 13"><path d="M2.5 1.5h5v6h-5z M1 7.5h8 M5 8v4" fill="none" stroke="#4a3c10" stroke-width="1.3"/></svg>
<svg class="a" style="left:1319px;top:672px" width="10" height="10" viewBox="0 0 10 10"><path d="M1 1L9 9M9 1L1 9" stroke="#4a3c10" stroke-width="1.4"/></svg>
<div class="a" style="left:294px;top:687px;width:1038px;height:303px;background:#fff"></div>
<div class="a" style="left:294px;top:688px;width:1020px;height:20px;background:#efefef;border-bottom:1px solid #a0a0a0"></div>
<div class="a" style="left:294px;top:708px;width:9px;height:282px;background:#f6f6f6"></div>
<div class="a" style="left:302px;top:688px;width:1px;height:20px;background:#b0b0b0"></div>
<div class="a" style="left:846px;top:688px;width:1px;height:302px;background:#b8b8b8"></div>
<div class="a" style="left:1262px;top:688px;width:1px;height:302px;background:#b8b8b8"></div>
<div class="t" style="left:308px;top:691px;">Name</div>
<div class="t" style="left:851px;top:691px;">Value</div>
<div class="t" style="left:1268px;top:691px;">Type</div>
<div class="a" style="left:1314px;top:688px;width:17px;height:302px;background:linear-gradient(90deg,#e6e6e6,#f0f0f0 50%,#e6e6e6)"></div>
<div class="a" style="left:1319px;top:695px;width:0;height:0;border-left:4px solid transparent;border-right:4px solid transparent;border-bottom:4px solid #404040"></div>
<div class="a" style="left:1315px;top:739px;width:15px;height:167px;background:linear-gradient(90deg,#f4f4f4,#e2e2e2 50%,#cdcdcd);border:1px solid #989898;border-radius:2px"></div>
<svg class="a" style="left:1318px;top:818px" width="9" height="8" viewBox="0 0 9 8"><path d="M1 1.5h7M1 3.5h7M1 5.5h7" stroke="#505050"/></svg>
<div class="a" style="left:1319px;top:981px;width:0;height:0;border-left:4px solid transparent;border-right:4px solid transparent;border-top:4px solid #404040"></div>
<div class="a" style="left:303px;top:708px;width:1011px;height:282px;overflow:hidden">
<div class="a" style="left:0;top:17px;width:1011px;height:1px;background:#a0a0a0"></div>
<svg class="a" style="left:19px;top:3px" width="10" height="10" viewBox="0 0 10 10"><defs><linearGradient id="pg" x1="0" y1="0" x2="0" y2="1"><stop offset="0" stop-color="#fff"/><stop offset="1" stop-color="#dcdcdc"/></linearGradient></defs><rect x="1.5" y="1.5" width="8" height="8" rx="1.5" fill="url(#pg)" stroke="#8c8c8c"/><path d="M3 5.5h5" stroke="#2a3a7a" stroke-width="1"/></svg>
<svg class="a" style="left:39px;top:2px" width="10" height="13" viewBox="0 0 10 13"><path d="M5 1 L9 3.5 L4.5 7 L1 4.5z" fill="#a4d0f8"/><path d="M1 4.5 L4.5 7 L4.5 12 L1 9z" fill="#4a8ee0"/><path d="M9 3.5 L9 8 L4.5 12 L4.5 7z" fill="#0c3ea8"/></svg>
<div class="t" style="left:55px;top:1px;color:#000;letter-spacing:0px">[1]</div>
<div class="t" style="left:548px;top:1px;color:#000;letter-spacing:-0.35px">{...}</div>
<div class="t" style="left:963px;top:1px;width:46px;overflow:hidden;letter-spacing:-0.6px;color:#000">D3DXVECTOR3</div>
<div class="a" style="left:0;top:34px;width:1011px;height:1px;background:#a0a0a0"></div>
<svg class="a" style="left:36px;top:20px" width="10" height="10" viewBox="0 0 10 10"><defs><linearGradient id="pg" x1="0" y1="0" x2="0" y2="1"><stop offset="0" stop-color="#fff"/><stop offset="1" stop-color="#dcdcdc"/></linearGradient></defs><rect x="1.5" y="1.5" width="8" height="8" rx="1.5" fill="url(#pg)" stroke="#8c8c8c"/><path d="M3 5.5h5" stroke="#2a3a7a" stroke-width="1"/><path d="M5.5 3v5" stroke="#2a3a7a" stroke-width="1"/></svg>
<svg class="a" style="left:56px;top:19px" width="10" height="13" viewBox="0 0 10 13"><path d="M5 1 L9 3.5 L4.5 7 L1 4.5z" fill="#a4d0f8"/><path d="M1 4.5 L4.5 7 L4.5 12 L1 9z" fill="#4a8ee0"/><path d="M9 3.5 L9 8 L4.5 12 L4.5 7z" fill="#0c3ea8"/></svg>
<div class="t" style="left:72px;top:18px;color:#000;letter-spacing:-0.8px">_D3DVECTOR</div>
<div class="t" style="left:548px;top:18px;color:#000;letter-spacing:-0.35px">{x=0.26483729 y=-0.19387710 z=-0.21420537 }</div>
<div class="t" style="left:963px;top:18px;width:46px;overflow:hidden;letter-spacing:-0.6px;color:#000">_D3DVECTOR</div>
<div class="a" style="left:0;top:51px;width:1011px;height:1px;background:#a0a0a0"></div>
<svg class="a" style="left:19px;top:37px" width="10" height="10" viewBox="0 0 10 10"><defs><linearGradient id="pg" x1="0" y1="0" x2="0" y2="1"><stop offset="0" stop-color="#fff"/><stop offset="1" stop-color="#dcdcdc"/></linearGradient></defs><rect x="1.5" y="1.5" width="8" height="8" rx="1.5" fill="url(#pg)" stroke="#8c8c8c"/><path d="M3 5.5h5" stroke="#2a3a7a" stroke-width="1"/></svg>
<svg class="a" style="left:39px;top:36px" width="10" height="13" viewBox="0 0 10 13"><path d="M5 1 L9 3.5 L4.5 7 L1 4.5z" fill="#a4d0f8"/><path d="M1 4.5 L4.5 7 L4.5 12 L1 9z" fill="#4a8ee0"/><path d="M9 3.5 L9 8 L4.5 12 L4.5 7z" fill="#0c3ea8"/></svg>
<div class="t" style="left:55px;top:35px;color:#000;letter-spacing:0px">[2]</div>
<div class="t" style="left:548px;top:35px;color:#000;letter-spacing:-0.35px">{...}</div>
<div class="t" style="left:963px;top:35px;width:46px;overflow:hidden;letter-spacing:-0.6px;color:#000">D3DXVECTOR3</div>
<div class="a" style="left:0;top:68px;width:1011px;height:1px;background:#a0a0a0"></div>
<svg class="a" style="left:36px;top:54px" width="10" height="10" viewBox="0 0 10 10"><defs><linearGradient id="pg" x1="0" y1="0" x2="0" y2="1"><stop offset="0" stop-color="#fff"/><stop offset="1" stop-color="#dcdcdc"/></linearGradient></defs><rect x="1.5" y="1.5" width="8" height="8" rx="1.5" fill="url(#pg)" stroke="#8c8c8c"/><path d="M3 5.5h5" stroke="#2a3a7a" stroke-width="1"/><path d="M5.5 3v5" stroke="#2a3a7a" stroke-width="1"/></svg>
<svg class="a" style="left:56px;top:53px" width="10" height="13" viewBox="0 0 10 13"><path d="M5 1 L9 3.5 L4.5 7 L1 4.5z" fill="#a4d0f8"/><path d="M1 4.5 L4.5 7 L4.5 12 L1 9z" fill="#4a8ee0"/><path d="M9 3.5 L9 8 L4.5 12 L4.5 7z" fill="#0c3ea8"/></svg>
<div class="t" style="left:72px;top:52px;color:#000;letter-spacing:-0.8px">_D3DVECTOR</div>
<div class="t" style="left:548px;top:52px;color:#000;letter-spacing:-0.35px">{x=0.26483729 y=0.19387710 z=-0.21420537 }</div>
<div class="t" style="left:963px;top:52px;width:46px;overflow:hidden;letter-spacing:-0.6px;color:#000">_D3DVECTOR</div>
<div class="a" style="left:0;top:85px;width:1011px;height:1px;background:#a0a0a0"></div>
<svg class="a" style="left:19px;top:71px" width="10" height="10" viewBox="0 0 10 10"><defs><linearGradient id="pg" x1="0" y1="0" x2="0" y2="1"><stop offset="0" stop-color="#fff"/><stop offset="1" stop-color="#dcdcdc"/></linearGradient></defs><rect x="1.5" y="1.5" width="8" height="8" rx="1.5" fill="url(#pg)" stroke="#8c8c8c"/><path d="M3 5.5h5" stroke="#2a3a7a" stroke-width="1"/></svg>
<svg class="a" style="left:39px;top:70px" width="10" height="13" viewBox="0 0 10 13"><path d="M5 1 L9 3.5 L4.5 7 L1 4.5z" fill="#a4d0f8"/><path d="M1 4.5 L4.5 7 L4.5 12 L1 9z" fill="#4a8ee0"/><path d="M9 3.5 L9 8 L4.5 12 L4.5 7z" fill="#0c3ea8"/></svg>
<div class="t" style="left:55px;top:69px;color:#000;letter-spacing:0px">[3]</div>
<div class="t" style="left:548px;top:69px;color:#000;letter-spacing:-0.35px">{...}</div>
<div class="t" style="left:963px;top:69px;width:46px;overflow:hidden;letter-spacing:-0.6px;color:#000">D3DXVECTOR3</div>
<div class="a" style="left:0;top:102px;width:1011px;height:1px;background:#a0a0a0"></div>
<svg class="a" style="left:36px;top:88px" width="10" height="10" viewBox="0 0 10 10"><defs><linearGradient id="pg" x1="0" y1="0" x2="0" y2="1"><stop offset="0" stop-color="#fff"/><stop offset="1" stop-color="#dcdcdc"/></linearGradient></defs><rect x="1.5" y="1.5" width="8" height="8" rx="1.5" fill="url(#pg)" stroke="#8c8c8c"/><path d="M3 5.5h5" stroke="#2a3a7a" stroke-width="1"/><path d="M5.5 3v5" stroke="#2a3a7a" stroke-width="1"/></svg>
<svg class="a" style="left:56px;top:87px" width="10" height="13" viewBox="0 0 10 13"><path d="M5 1 L9 3.5 L4.5 7 L1 4.5z" fill="#a4d0f8"/><path d="M1 4.5 L4.5 7 L4.5 12 L1 9z" fill="#4a8ee0"/><path d="M9 3.5 L9 8 L4.5 12 L4.5 7z" fill="#0c3ea8"/></svg>
<div class="t" style="left:72px;top:86px;color:#000;letter-spacing:-0.8px">_D3DVECTOR</div>
<div class="t" style="left:548px;top:86px;color:#000;letter-spacing:-0.35px">{x=-0.26483729 y=0.19387710 z=-0.21420537 }</div>
<div class="t" style="left:963px;top:86px;width:46px;overflow:hidden;letter-spacing:-0.6px;color:#000">_D3DVECTOR</div>
<div class="a" style="left:0;top:119px;width:1011px;height:1px;background:#a0a0a0"></div>
<svg class="a" style="left:19px;top:105px" width="10" height="10" viewBox="0 0 10 10"><defs><linearGradient id="pg" x1="0" y1="0" x2="0" y2="1"><stop offset="0" stop-color="#fff"/><stop offset="1" stop-color="#dcdcdc"/></linearGradient></defs><rect x="1.5" y="1.5" width="8" height="8" rx="1.5" fill="url(#pg)" stroke="#8c8c8c"/><path d="M3 5.5h5" stroke="#2a3a7a" stroke-width="1"/></svg>
<svg class="a" style="left:39px;top:104px" width="10" height="13" viewBox="0 0 10 13"><path d="M5 1 L9 3.5 L4.5 7 L1 4.5z" fill="#a4d0f8"/><path d="M1 4.5 L4.5 7 L4.5 12 L1 9z" fill="#4a8ee0"/><path d="M9 3.5 L9 8 L4.5 12 L4.5 7z" fill="#0c3ea8"/></svg>
<div class="t" style="left:55px;top:103px;color:#000;letter-spacing:0px">[4]</div>
<div class="t" style="left:548px;top:103px;color:#000;letter-spacing:-0.35px">{...}</div>
<div class="t" style="left:963px;top:103px;width:46px;overflow:hidden;letter-spacing:-0.6px;color:#000">D3DXVECTOR3</div>
<div class="a" style="left:0;top:136px;width:1011px;height:1px;background:#a0a0a0"></div>
<svg class="a" style="left:36px;top:122px" width="10" height="10" viewBox="0 0 10 10"><defs><linearGradient id="pg" x1="0" y1="0" x2="0" y2="1"><stop offset="0" stop-color="#fff"/><stop offset="1" stop-color="#dcdcdc"/></linearGradient></defs><rect x="1.5" y="1.5" width="8" height="8" rx="1.5" fill="url(#pg)" stroke="#8c8c8c"/><path d="M3 5.5h5" stroke="#2a3a7a" stroke-width="1"/><path d="M5.5 3v5" stroke="#2a3a7a" stroke-width="1"/></svg>
<svg class="a" style="left:56px;top:121px" width="10" height="13" viewBox="0 0 10 13"><path d="M5 1 L9 3.5 L4.5 7 L1 4.5z" fill="#a4d0f8"/><path d="M1 4.5 L4.5 7 L4.5 12 L1 9z" fill="#4a8ee0"/><path d="M9 3.5 L9 8 L4.5 12 L4.5 7z" fill="#0c3ea8"/></svg>
<div class="t" style="left:72px;top:120px;color:#000;letter-spacing:-0.8px">_D3DVECTOR</div>
<div class="t" style="left:548px;top:120px;color:#000;letter-spacing:-0.35px">{x=-0.26483729 y=-0.19387710 z=0.21420537 }</div>
<div class="t" style="left:963px;top:120px;width:46px;overflow:hidden;letter-spacing:-0.6px;color:#000">_D3DVECTOR</div>
<div class="a" style="left:0;top:153px;width:1011px;height:1px;background:#a0a0a0"></div>
<svg class="a" style="left:19px;top:139px" width="10" height="10" viewBox="0 0 10 10"><defs><linearGradient id="pg" x1="0" y1="0" x2="0" y2="1"><stop offset="0" stop-color="#fff"/><stop offset="1" stop-color="#dcdcdc"/></linearGradient></defs><rect x="1.5" y="1.5" width="8" height="8" rx="1.5" fill="url(#pg)" stroke="#8c8c8c"/><path d="M3 5.5h5" stroke="#2a3a7a" stroke-width="1"/></svg>
<svg class="a" style="left:39px;top:138px" width="10" height="13" viewBox="0 0 10 13"><path d="M5 1 L9 3.5 L4.5 7 L1 4.5z" fill="#a4d0f8"/><path d="M1 4.5 L4.5 7 L4.5 12 L1 9z" fill="#4a8ee0"/><path d="M9 3.5 L9 8 L4.5 12 L4.5 7z" fill="#0c3ea8"/></svg>
<div class="t" style="left:55px;top:137px;color:#000;letter-spacing:0px">[5]</div>
<div class="t" style="left:548px;top:137px;color:#000;letter-spacing:-0.35px">{...}</div>
<div class="t" style="left:963px;top:137px;width:46px;overflow:hidden;letter-spacing:-0.6px;color:#000">D3DXVECTOR3</div>
<div class="a" style="left:0;top:170px;width:1011px;height:1px;background:#a0a0a0"></div>
<svg class="a" style="left:36px;top:156px" width="10" height="10" viewBox="0 0 10 10"><defs><linearGradient id="pg" x1="0" y1="0" x2="0" y2="1"><stop offset="0" stop-color="#fff"/><stop offset="1" stop-color="#dcdcdc"/></linearGradient></defs><rect x="1.5" y="1.5" width="8" height="8" rx="1.5" fill="url(#pg)" stroke="#8c8c8c"/><path d="M3 5.5h5" stroke="#2a3a7a" stroke-width="1"/><path d="M5.5 3v5" stroke="#2a3a7a" stroke-width="1"/></svg>
<svg class="a" style="left:56px;top:155px" width="10" height="13" viewBox="0 0 10 13"><path d="M5 1 L9 3.5 L4.5 7 L1 4.5z" fill="#a4d0f8"/><path d="M1 4.5 L4.5 7 L4.5 12 L1 9z" fill="#4a8ee0"/><path d="M9 3.5 L9 8 L4.5 12 L4.5 7z" fill="#0c3ea8"/></svg>
<div class="t" style="left:72px;top:154px;color:#000;letter-spacing:-0.8px">_D3DVECTOR</div>
<div class="t" style="left:548px;top:154px;color:#000;letter-spacing:-0.35px">{x=0.26483729 y=-0.19387710 z=0.21420537 }</div>
<div class="t" style="left:963px;top:154px;width:46px;overflow:hidden;letter-spacing:-0.6px;color:#000">_D3DVECTOR</div>
<div class="a" style="left:0;top:187px;width:1011px;height:1px;background:#a0a0a0"></div>
<svg class="a" style="left:19px;top:173px" width="10" height="10" viewBox="0 0 10 10"><defs><linearGradient id="pg" x1="0" y1="0" x2="0" y2="1"><stop offset="0" stop-color="#fff"/><stop offset="1" stop-color="#dcdcdc"/></linearGradient></defs><rect x="1.5" y="1.5" width="8" height="8" rx="1.5" fill="url(#pg)" stroke="#8c8c8c"/><path d="M3 5.5h5" stroke="#2a3a7a" stroke-width="1"/></svg>
<svg class="a" style="left:39px;top:172px" width="10" height="13" viewBox="0 0 10 13"><path d="M5 1 L9 3.5 L4.5 7 L1 4.5z" fill="#a4d0f8"/><path d="M1 4.5 L4.5 7 L4.5 12 L1 9z" fill="#4a8ee0"/><path d="M9 3.5 L9 8 L4.5 12 L4.5 7z" fill="#0c3ea8"/></svg>
<div class="t" style="left:55px;top:171px;color:#000;letter-spacing:0px">[6]</div>
<div class="t" style="left:548px;top:171px;color:#000;letter-spacing:-0.35px">{...}</div>
<div class="t" style="left:963px;top:171px;width:46px;overflow:hidden;letter-spacing:-0.6px;color:#000">D3DXVECTOR3</div>
<div class="a" style="left:0;top:204px;width:1011px;height:1px;background:#a0a0a0"></div>
<svg class="a" style="left:36px;top:190px" width="10" height="10" viewBox="0 0 10 10"><defs><linearGradient id="pg" x1="0" y1="0" x2="0" y2="1"><stop offset="0" stop-color="#fff"/><stop offset="1" stop-color="#dcdcdc"/></linearGradient></defs><rect x="1.5" y="1.5" width="8" height="8" rx="1.5" fill="url(#pg)" stroke="#8c8c8c"/><path d="M3 5.5h5" stroke="#2a3a7a" stroke-width="1"/><path d="M5.5 3v5" stroke="#2a3a7a" stroke-width="1"/></svg>
<svg class="a" style="left:56px;top:189px" width="10" height="13" viewBox="0 0 10 13"><path d="M5 1 L9 3.5 L4.5 7 L1 4.5z" fill="#a4d0f8"/><path d="M1 4.5 L4.5 7 L4.5 12 L1 9z" fill="#4a8ee0"/><path d="M9 3.5 L9 8 L4.5 12 L4.5 7z" fill="#0c3ea8"/></svg>
<div class="t" style="left:72px;top:188px;color:#000;letter-spacing:-0.8px">_D3DVECTOR</div>
<div class="t" style="left:548px;top:188px;color:#000;letter-spacing:-0.35px">{x=0.26483729 y=0.19387710 z=0.21420537 }</div>
<div class="t" style="left:963px;top:188px;width:46px;overflow:hidden;letter-spacing:-0.6px;color:#000">_D3DVECTOR</div>
<div class="a" style="left:0;top:205px;width:1011px;height:17px;background:#3399ff"></div>
<div class="a" style="left:0;top:221px;width:1011px;height:1px;background:#a0a0a0"></div>
<svg class="a" style="left:19px;top:207px" width="10" height="10" viewBox="0 0 10 10"><defs><linearGradient id="pg" x1="0" y1="0" x2="0" y2="1"><stop offset="0" stop-color="#fff"/><stop offset="1" stop-color="#dcdcdc"/></linearGradient></defs><rect x="1.5" y="1.5" width="8" height="8" rx="1.5" fill="url(#pg)" stroke="#e8e8e8"/><path d="M3 5.5h5" stroke="#2a3a7a" stroke-width="1"/></svg>
<svg class="a" style="left:39px;top:206px" width="10" height="13" viewBox="0 0 10 13"><path d="M5 1 L9 3.5 L4.5 7 L1 4.5z" fill="#a4d0f8"/><path d="M1 4.5 L4.5 7 L4.5 12 L1 9z" fill="#4a8ee0"/><path d="M9 3.5 L9 8 L4.5 12 L4.5 7z" fill="#0c3ea8"/></svg>
<div class="t" style="left:55px;top:205px;color:#fff;letter-spacing:0px">[7]</div>
<div class="t" style="left:548px;top:205px;color:#fff;letter-spacing:-0.35px">{...}</div>
<div class="t" style="left:963px;top:205px;width:46px;overflow:hidden;letter-spacing:-0.6px;color:#fff">D3DXVECTOR3</div>
<div class="a" style="left:0;top:238px;width:1011px;height:1px;background:#a0a0a0"></div>
<svg class="a" style="left:36px;top:224px" width="10" height="10" viewBox="0 0 10 10"><defs><linearGradient id="pg" x1="0" y1="0" x2="0" y2="1"><stop offset="0" stop-color="#fff"/><stop offset="1" stop-color="#dcdcdc"/></linearGradient></defs><rect x="1.5" y="1.5" width="8" height="8" rx="1.5" fill="url(#pg)" stroke="#8c8c8c"/><path d="M3 5.5h5" stroke="#2a3a7a" stroke-width="1"/><path d="M5.5 3v5" stroke="#2a3a7a" stroke-width="1"/></svg>
<svg class="a" style="left:56px;top:223px" width="10" height="13" viewBox="0 0 10 13"><path d="M5 1 L9 3.5 L4.5 7 L1 4.5z" fill="#a4d0f8"/><path d="M1 4.5 L4.5 7 L4.5 12 L1 9z" fill="#4a8ee0"/><path d="M9 3.5 L9 8 L4.5 12 L4.5 7z" fill="#0c3ea8"/></svg>
<div class="t" style="left:72px;top:222px;color:#000;letter-spacing:-0.8px">_D3DVECTOR</div>
<div class="t" style="left:548px;top:222px;color:#000;letter-spacing:-0.35px">{x=-0.26483729 y=0.19387710 z=0.21420537 }</div>
<div class="t" style="left:963px;top:222px;width:46px;overflow:hidden;letter-spacing:-0.6px;color:#000">_D3DVECTOR</div>
<div class="a" style="left:0;top:255px;width:1011px;height:1px;background:#a0a0a0"></div>
<svg class="a" style="left:2px;top:241px" width="10" height="10" viewBox="0 0 10 10"><defs><linearGradient id="pg" x1="0" y1="0" x2="0" y2="1"><stop offset="0" stop-color="#fff"/><stop offset="1" stop-color="#dcdcdc"/></linearGradient></defs><rect x="1.5" y="1.5" width="8" height="8" rx="1.5" fill="url(#pg)" stroke="#8c8c8c"/><path d="M3 5.5h5" stroke="#2a3a7a" stroke-width="1"/><path d="M5.5 3v5" stroke="#2a3a7a" stroke-width="1"/></svg>
<svg class="a" style="left:22px;top:240px" width="10" height="13" viewBox="0 0 10 13"><path d="M5 1 L9 3.5 L4.5 7 L1 4.5z" fill="#a4d0f8"/><path d="M1 4.5 L4.5 7 L4.5 12 L1 9z" fill="#4a8ee0"/><path d="M9 3.5 L9 8 L4.5 12 L4.5 7z" fill="#0c3ea8"/></svg>
<div class="t" style="left:38px;top:239px;color:#000;letter-spacing:0px">OBBcorners[0]</div>
<div class="t" style="left:548px;top:239px;color:#000;letter-spacing:-0.35px">{...}</div>
<div class="t" style="left:963px;top:239px;width:46px;overflow:hidden;letter-spacing:-0.6px;color:#000">D3DXVECTOR3</div>
<div class="a" style="left:0;top:272px;width:1011px;height:1px;background:#a0a0a0"></div>
<svg class="a" style="left:2px;top:258px" width="10" height="10" viewBox="0 0 10 10"><defs><linearGradient id="pg" x1="0" y1="0" x2="0" y2="1"><stop offset="0" stop-color="#fff"/><stop offset="1" stop-color="#dcdcdc"/></linearGradient></defs><rect x="1.5" y="1.5" width="8" height="8" rx="1.5" fill="url(#pg)" stroke="#8c8c8c"/><path d="M3 5.5h5" stroke="#2a3a7a" stroke-width="1"/><path d="M5.5 3v5" stroke="#2a3a7a" stroke-width="1"/></svg>
<svg class="a" style="left:22px;top:257px" width="10" height="13" viewBox="0 0 10 13"><path d="M5 1 L9 3.5 L4.5 7 L1 4.5z" fill="#a4d0f8"/><path d="M1 4.5 L4.5 7 L4.5 12 L1 9z" fill="#4a8ee0"/><path d="M9 3.5 L9 8 L4.5 12 L4.5 7z" fill="#0c3ea8"/></svg>
<div class="t" style="left:38px;top:256px;color:#000;letter-spacing:0px">OBBcorners[7]</div>
<div class="t" style="left:548px;top:256px;color:#000;letter-spacing:-0.35px">{...}</div>
<div class="t" style="left:963px;top:256px;width:46px;overflow:hidden;letter-spacing:-0.6px;color:#000">D3DXVECTOR3</div>
<div class="a" style="left:0;top:289px;width:1011px;height:1px;background:#a0a0a0"></div>
<svg class="a" style="left:2px;top:275px" width="10" height="10" viewBox="0 0 10 10"><defs><linearGradient id="pg" x1="0" y1="0" x2="0" y2="1"><stop offset="0" stop-color="#fff"/><stop offset="1" stop-color="#dcdcdc"/></linearGradient></defs><rect x="1.5" y="1.5" width="8" height="8" rx="1.5" fill="url(#pg)" stroke="#8c8c8c"/><path d="M3 5.5h5" stroke="#2a3a7a" stroke-width="1"/><path d="M5.5 3v5" stroke="#2a3a7a" stroke-width="1"/></svg>
<svg class="a" style="left:22px;top:274px" width="10" height="13" viewBox="0 0 10 13"><path d="M5 1 L9 3.5 L4.5 7 L1 4.5z" fill="#a4d0f8"/><path d="M1 4.5 L4.5 7 L4.5 12 L1 9z" fill="#4a8ee0"/><path d="M9 3.5 L9 8 L4.5 12 L4.5 7z" fill="#0c3ea8"/></svg>
<div class="t" style="left:38px;top:273px;color:#000;letter-spacing:0px">_Min</div>
<div class="t" style="left:548px;top:273px;color:#000;letter-spacing:-0.35px">{...}</div>
<div class="t" style="left:963px;top:273px;width:46px;overflow:hidden;letter-spacing:-0.6px;color:#000">D3DXVECTOR3</div>
</div>
<div class="a" style="left:846px;top:708px;width:1px;height:282px;background:#a0a0a0"></div>
<div class="a" style="left:1262px;top:708px;width:1px;height:282px;background:#a0a0a0"></div>
<div class="a" style="left:294px;top:990px;width:60px;height:21px;background:#fff;border-radius:0 0 3px 3px"></div>
<svg class="a" style="left:299px;top:993px" width="17" height="16" viewBox="0 0 17 16"><rect x="1.5" y="2.5" width="13" height="11" fill="#fff" stroke="#3a5a90"/><rect x="2" y="3" width="12" height="2.5" fill="#5a86c8"/><path d="M3 7.5h4M8 7.5h5M3 9.5h4M8 9.5h5M3 11.5h4" stroke="#30a050"/><path d="M11 11l3 3l2-2" stroke="#d040c0" fill="none"/></svg>
<div class="t" style="left:319px;top:994px;">Autos</div>
<svg class="a" style="left:361px;top:993px" width="17" height="16" viewBox="0 0 17 16"><rect x="1.5" y="2.5" width="13" height="11" fill="#fff" stroke="#3a5a90"/><rect x="2" y="3" width="12" height="2.5" fill="#5a86c8"/><path d="M3 7.5h4M8 7.5h5M3 9.5h4M8 9.5h5M3 11.5h4" stroke="#4a6ab0"/><path d="M2 15l4-5l2 2z" fill="#e0a030"/><path d="M1 15l2-1" stroke="#d040c0"/></svg>
<div class="t" style="left:380px;top:994px;color:#fff">Locals</div>
<svg class="a" style="left:425px;top:993px" width="17" height="16" viewBox="0 0 17 16"><path d="M3.5 1.5h8l2 2v11h-10z" fill="#fff" stroke="#6a7a98"/><path d="M5 4.5h5M5 6.5h6" stroke="#3a5a90"/><path d="M1 11 c2 -3 4 -3 6 0 s4 3 6 0" fill="none" stroke="#3a70d0" stroke-width="1.2"/><path d="M7 11 c2 3 4 3 8 -1" fill="none" stroke="#d04040" stroke-width="1.2"/></svg>
<div class="t" style="left:443px;top:994px;color:#fff">Threads</div>
<svg class="a" style="left:496px;top:993px" width="17" height="16" viewBox="0 0 17 16"><rect x="1.5" y="2.5" width="14" height="11" fill="#fff" stroke="#3a5a90"/><rect x="2" y="3" width="13" height="2.5" fill="#5a86c8"/><path d="M3 11l3-3l2 2l3-3l2 2" fill="none" stroke="#e060c0" stroke-width="1.5"/><path d="M3 9l3-3l2 2l3-3l2 2" fill="none" stroke="#5080e0" stroke-width="1.2"/></svg>
<div class="t" style="left:515px;top:994px;color:#fff">Modules</div>
<svg class="a" style="left:571px;top:993px" width="17" height="16" viewBox="0 0 17 16"><rect x="2.5" y="1.5" width="13" height="11" fill="#fff" stroke="#3a5a90"/><rect x="3" y="2" width="12" height="2.5" fill="#5a86c8"/><path d="M5 6.5h3M9 6.5h4M5 8.5h3M9 8.5h4" stroke="#4a6ab0"/><circle cx="4" cy="13" r="2" fill="#fff" stroke="#404040"/><circle cx="9" cy="13" r="2" fill="#fff" stroke="#404040"/></svg>
<div class="t" style="left:591px;top:994px;color:#fff">Watch 1</div>
<div class="a" style="left:1338px;top:668px;width:575px;height:19px;background:linear-gradient(#51638a,#465878 50%,#3f5172);border-radius:2px 2px 0 0"></div>
<div class="t" style="left:1340px;top:671px;color:#fff">Output</div>
<div class="a" style="left:1871px;top:675px;width:0;height:0;border-left:4px solid transparent;border-right:4px solid transparent;border-top:4px solid #e8ecf4"></div>
<svg class="a" style="left:1885px;top:671px" width="10" height="13" viewBox="0 0 10 13"><path d="M2.5 1.5h5v6h-5z M1 7.5h8 M5 8v4" fill="none" stroke="#e8ecf4" stroke-width="1.3"/></svg>
<svg class="a" style="left:1900px;top:672px" width="10" height="10" viewBox="0 0 10 10"><path d="M1 1L9 9M9 1L1 9" stroke="#e8ecf4" stroke-width="1.4"/></svg>
<div class="a" style="left:1338px;top:687px;width:575px;height:26px;background:#bcc7d8"></div>
<div class="t" style="left:1345px;top:694px;color:#1e2a3e"><u>S</u>how output from:</div>
<div class="a" style="left:1451px;top:690px;width:299px;height:20px;background:#f2f2f7;border:1px solid #8e9bb3"></div>
<div class="t" style="left:1455px;top:694px;width:282px;overflow:hidden;color:#000;letter-spacing:0px">Debug</div>
<div class="a" style="left:1740px;top:699px;width:0;height:0;border-left:3px solid transparent;border-right:3px solid transparent;border-top:3px solid #000"></div>
<div class="a" style="left:1756px;top:693px;width:1px;height:17px;background:#8d9ab0"></div>
<svg class="a" style="left:1763px;top:693px" width="16" height="17" viewBox="0 0 16 17"><path d="M3.5 1.5h7l2 2v8h-9z" fill="#eef0f4" stroke="#a0a8b6"/><path d="M8 16v-5h-3l4-4l4 4h-3v5z" fill="#c0c6d0" stroke="#a0a8b6" stroke-width="0.6"/></svg>
<div class="a" style="left:1785px;top:693px;width:1px;height:17px;background:#8d9ab0"></div>
<svg class="a" style="left:1791px;top:693px" width="18" height="17" viewBox="0 0 18 17"><path d="M6.5 1.5h7l2 2v8h-9z" fill="#eef0f4" stroke="#a0a8b6"/><path d="M1 12l4-4v2h6v4h-6v2z" fill="#c0c6d0" stroke="#a0a8b6" stroke-width="0.6"/></svg>
<svg class="a" style="left:1813px;top:693px" width="18" height="17" viewBox="0 0 18 17"><path d="M1.5 1.5h7l2 2v8h-9z" fill="#eef0f4" stroke="#a0a8b6"/><path d="M17 12l-4-4v2h-6v4h6v2z" fill="#c0c6d0" stroke="#a0a8b6" stroke-width="0.6"/></svg>
<div class="a" style="left:1836px;top:693px;width:1px;height:17px;background:#8d9ab0"></div>
<svg class="a" style="left:1842px;top:693px" width="18" height="17" viewBox="0 0 18 17"><path d="M1 4.5h12M3 7.5h10M1 10.5h9M3 13.5h7" stroke="#6a7a94"/><path d="M9 9 L15 15 M15 9 L9 15" stroke="#e02010" stroke-width="2.2"/></svg>
<div class="a" style="left:1865px;top:693px;width:1px;height:17px;background:#8d9ab0"></div>
<svg class="a" style="left:1871px;top:693px" width="17" height="17" viewBox="0 0 17 17"><rect x="0.5" y="2.5" width="15" height="11" fill="#fff" stroke="#2a4a90"/><rect x="1" y="3" width="14" height="1.5" fill="#5a86c8"/><path d="M12 6v4h-7" fill="none" stroke="#000" stroke-width="1.5"/><path d="M4 10 l3 -2.5 v5z" fill="#000"/></svg>
<div class="a" style="left:1338px;top:713px;width:575px;height:262px;background:#fff"></div>
<div class="a" style="left:1338px;top:713px;width:558px;height:262px;overflow:hidden">
<div class="o" style="left:12px;top:-8px">Miss rate before optimization: 1.000000</div>
<div class="o" style="left:12px;top:7px">Miss rate after optimization: 1.000000</div>
<div class="o" style="left:12px;top:22px">Warning: no tangents and/or binormals in mesh, calculating with D3DX!</div>
<div class="o" style="left:12px;top:37px">Miss rate before optimization: 1.203765</div>
<div class="o" style="left:12px;top:52px">Miss rate after optimization: 1.060908</div>
<div class="o" style="left:12px;top:67px">Miss rate before optimization: 1.000000</div>
<div class="o" style="left:12px;top:82px">Miss rate after optimization: 1.000000</div>
<div class="o" style="left:12px;top:97px">Warning: no tangents and/or binormals in mesh, calculating with D3DX!</div>
<div class="o" style="left:12px;top:112px">Miss rate before optimization: 1.000000</div>
<div class="o" style="left:12px;top:127px">Miss rate after optimization: 1.000000</div>
<div class="o" style="left:12px;top:142px">Warning: no tangents and/or binormals in mesh, calculating with D3DX!</div>
<div class="o" style="left:12px;top:157px">Miss rate before optimization: 1.000000</div>
<div class="o" style="left:12px;top:172px">Miss rate after optimization: 1.000000</div>
<div class="o" style="left:12px;top:187px">Warning: no tangents and/or binormals in mesh, calculating with D3DX!</div>
<div class="o" style="left:12px;top:202px">Miss rate before optimization: 1.000000</div>
<div class="o" style="left:12px;top:217px">Miss rate after optimization: 1.000000</div>
<div class="o" style="left:12px;top:232px">Warning: no tangents and/or binormals in mesh, calculating with D3DX!</div>
</div>
<div class="a" style="left:1896px;top:713px;width:17px;height:262px;background:linear-gradient(90deg,#e6e6e6,#f0f0f0 50%,#e6e6e6)"></div>
<div class="a" style="left:1900px;top:719px;width:0;height:0;border-left:4px solid transparent;border-right:4px solid transparent;border-bottom:4px solid #a0a0a0"></div>
<div class="a" style="left:1897px;top:912px;width:15px;height:26px;background:linear-gradient(90deg,#f4f4f4,#e2e2e2 50%,#cdcdcd);border:1px solid #989898;border-radius:2px"></div>
<svg class="a" style="left:1900px;top:920px" width="9" height="8" viewBox="0 0 9 8"><path d="M1 1.5h7M1 3.5h7M1 5.5h7" stroke="#404040"/></svg>
<div class="a" style="left:1900px;top:964px;width:0;height:0;border-left:4px solid transparent;border-right:4px solid transparent;border-top:4px solid #707070"></div>
<div class="a" style="left:1338px;top:974px;width:558px;height:16px;background:linear-gradient(#eaeaea,#f4f4f4 50%,#eaeaea)"></div>
<div class="a" style="left:1896px;top:974px;width:17px;height:16px;background:#fff"></div>
<div class="a" style="left:1344px;top:978px;width:0;height:0;border-top:4px solid transparent;border-bottom:4px solid transparent;border-right:4px solid #909090"></div>
<div class="a" style="left:1355px;top:975px;width:266px;height:14px;background:linear-gradient(#f4f4f4,#e0e0e0 50%,#cdcdcd);border:1px solid #989898;border-radius:2px"></div>
<svg class="a" style="left:1483px;top:978px" width="9" height="8" viewBox="0 0 9 8"><path d="M1.5 1v7M3.5 1v7M5.5 1v7" stroke="#404040"/></svg>
<div class="a" style="left:1886px;top:978px;width:0;height:0;border-top:4px solid transparent;border-bottom:4px solid transparent;border-left:4px solid #707070"></div>
<svg class="a" style="left:1343px;top:993px" width="17" height="16" viewBox="0 0 17 16"><rect x="5.5" y="1.5" width="8" height="6" fill="#fff" stroke="#3a5a90"/><rect x="8.5" y="6.5" width="8" height="7" fill="#fff" stroke="#3a5a90"/><circle cx="4" cy="12" r="3" fill="#3a6ac8"/></svg>
<div class="t" style="left:1363px;top:994px;color:#fff">Call Stack</div>
<svg class="a" style="left:1424px;top:993px" width="18" height="17" viewBox="0 0 18 17"><rect x="0.5" y="1.5" width="13" height="12" fill="#fff" stroke="#3a5a90"/><rect x="1" y="2" width="12" height="2.5" fill="#5a86c8"/><circle cx="12" cy="12" r="4.5" fill="#d02020"/></svg>
<div class="t" style="left:1444px;top:994px;color:#fff">Breakpoints</div>
<div class="a" style="left:1511px;top:990px;width:68px;height:21px;background:#fff;border-radius:0 0 3px 3px"></div>
<svg class="a" style="left:1517px;top:994px" width="15" height="14" viewBox="0 0 15 14"><rect x="0.5" y="0.5" width="13" height="12" fill="#fff" stroke="#2a4a90"/><rect x="1" y="1" width="2" height="11" fill="#a8c0e8"/><path d="M4 3.5h7M4 5.5h7M4 7.5h7M4 9.5h5" stroke="#4a6ab0"/></svg>
<div class="t" style="left:1536px;top:994px;">Output</div>
<svg class="a" style="left:1584px;top:993px" width="18" height="17" viewBox="0 0 18 17"><rect x="1.5" y="3.5" width="11" height="12" fill="#fff" stroke="#7a8294"/><rect x="4.5" y="1.5" width="5" height="3" fill="#f0d080" stroke="#9a7420"/><circle cx="13" cy="13" r="4" fill="#e04020"/><path d="M11 11l4 4M15 11l-4 4" stroke="#fff" stroke-width="1.2"/></svg>
<div class="t" style="left:1604px;top:994px;color:#fff">Error List</div>
<div class="a" style="left:0px;top:1015px;width:1920px;height:25px;background:#293955"></div>
<div class="t" style="left:5px;top:1022px;color:#fff">Ready</div>
</body></html>
